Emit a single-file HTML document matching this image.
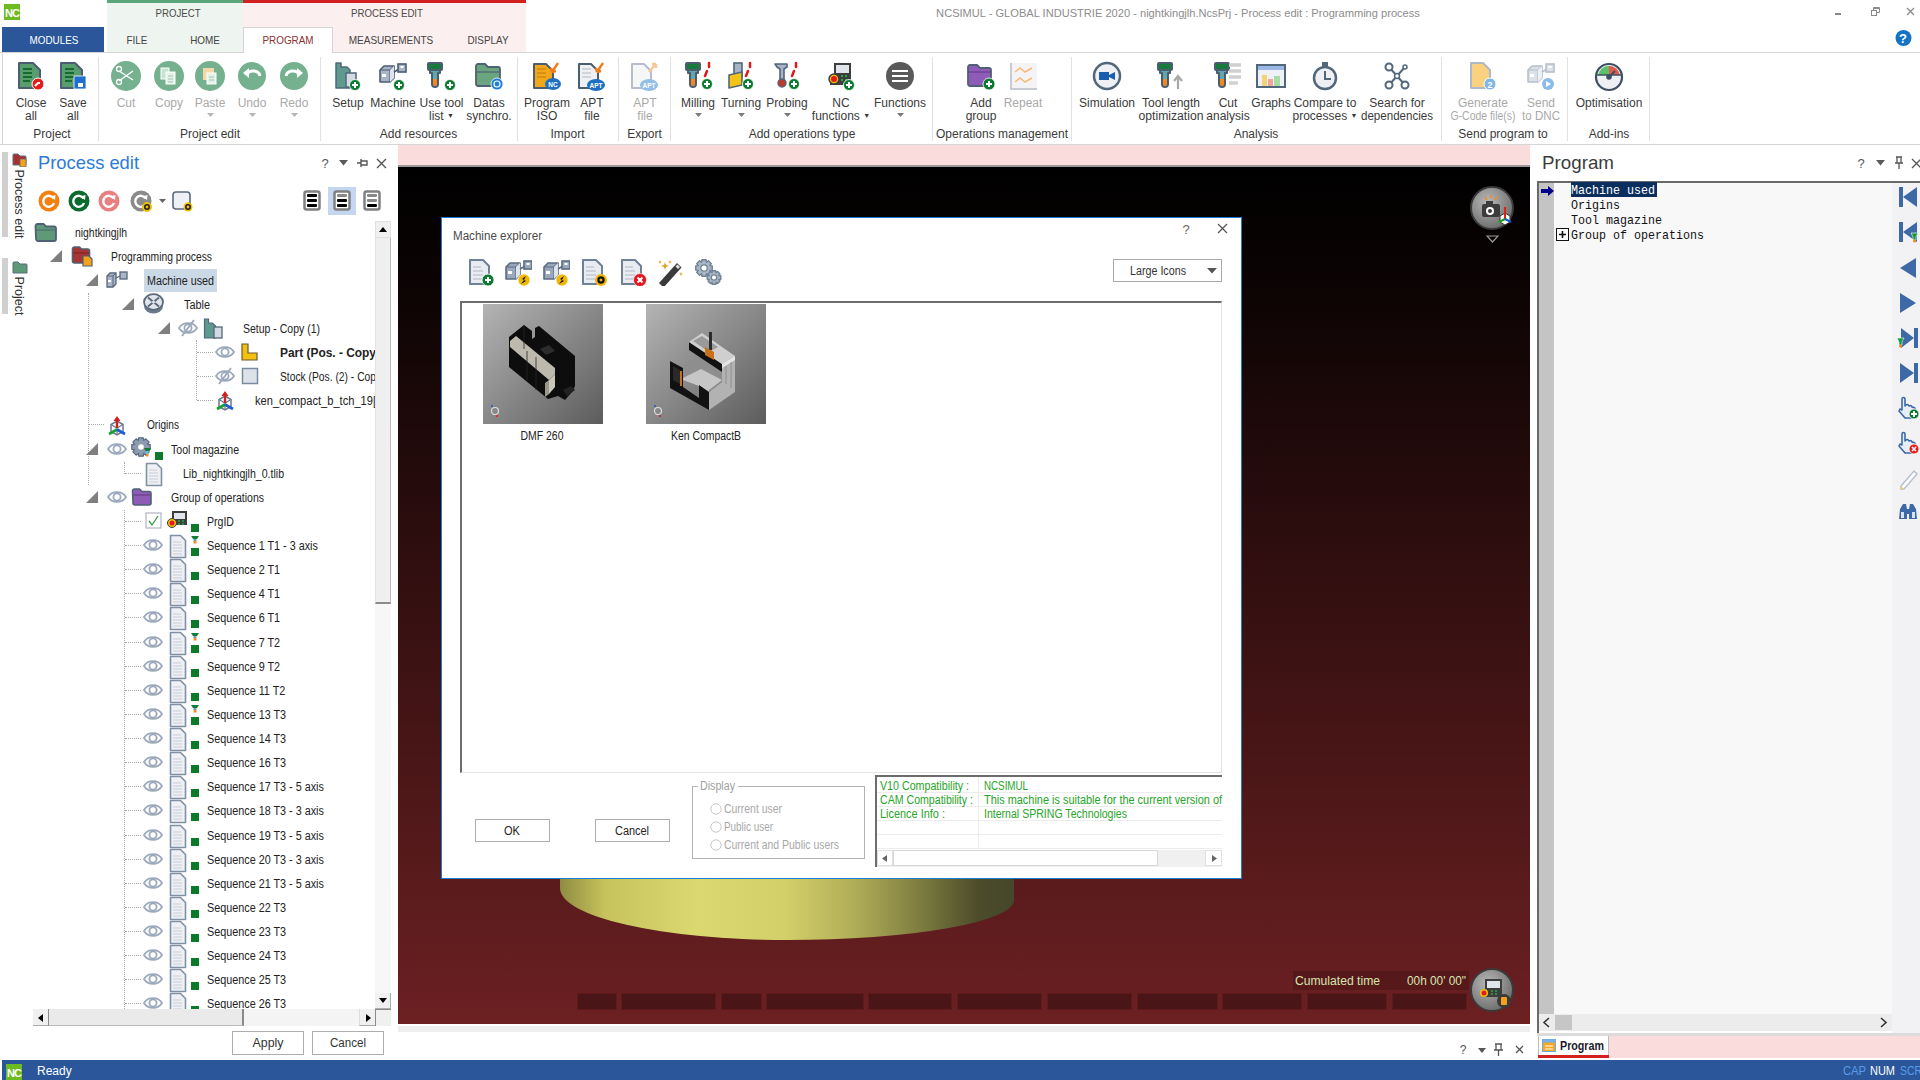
<!DOCTYPE html><html><head><meta charset="utf-8"><style>
*{margin:0;padding:0;box-sizing:border-box}
html,body{width:1920px;height:1080px;overflow:hidden;background:#fff;font-family:"Liberation Sans",sans-serif}
.a{position:absolute}
.t{position:absolute;white-space:nowrap;line-height:1}
</style></head><body><div class="a" style="left:4px;top:4px;width:16px;height:16px;background:#6cbb21"></div><div class="t" style="left:12px;top:12.5px;font-size:11px;color:#fff;font-weight:bold;letter-spacing:-1px;font-family:'Liberation Sans',sans-serif;transform:translate(-50%,-50%);">NC</div><div class="a" style="left:107px;top:0px;width:136px;height:52px;background:#eef5f0"></div><div class="a" style="left:107px;top:0px;width:136px;height:3px;background:#5ba57b"></div><div class="a" style="left:243px;top:0px;width:283px;height:52px;background:#fcefef"></div><div class="a" style="left:243px;top:0px;width:283px;height:3px;background:#d21f1f"></div><div class="t" style="left:178px;top:14px;font-size:11.5px;color:#4a4a4a;font-family:'Liberation Sans',sans-serif;transform:translate(-50%,-50%) scaleX(0.84);transform-origin:50% 50%;">PROJECT</div><div class="t" style="left:387px;top:14px;font-size:11.5px;color:#4a4a4a;font-family:'Liberation Sans',sans-serif;transform:translate(-50%,-50%) scaleX(0.84);transform-origin:50% 50%;">PROCESS EDIT</div><div class="t" style="left:1178px;top:13.5px;font-size:11.1px;color:#8c8c8c;font-family:'Liberation Sans',sans-serif;transform:translate(-50%,-50%);">NCSIMUL - GLOBAL INDUSTRIE 2020 - nightkingjlh.NcsPrj - Process edit : Programming process</div><div class="a" style="left:1835px;top:13px;width:6px;height:2px;background:#8a8a8a"></div><svg class="a" style="left:1871px;top:7px" width="9" height="9" viewBox="0 0 9 9"><rect x="0.5" y="3.5" width="5" height="5" fill="none" stroke="#8a8a8a"/><path d="M2.5 3.5V0.5h6v5h-3" fill="none" stroke="#8a8a8a"/><path d="M2.5 1.5h6" stroke="#8a8a8a"/></svg><svg class="a" style="left:1906px;top:7px" width="9" height="9" viewBox="0 0 9 9"><path d="M1 1L8 8M8 1L1 8" stroke="#8a8a8a" stroke-width="1.3"/></svg><div class="a" style="left:2px;top:27px;width:102px;height:25px;background:#2b579a"></div><div class="t" style="left:54px;top:41px;font-size:11.5px;color:#fff;font-family:'Liberation Sans',sans-serif;transform:translate(-50%,-50%) scaleX(0.86);transform-origin:50% 50%;">MODULES</div><div class="a" style="left:0px;top:52px;width:1920px;height:1px;background:#d5d5d5"></div><div class="a" style="left:243px;top:27px;width:90px;height:26px;background:#fff;border:1px solid #d5d5d5;border-bottom:none"></div><div class="t" style="left:137px;top:41px;font-size:11.5px;color:#444;font-family:'Liberation Sans',sans-serif;transform:translate(-50%,-50%) scaleX(0.86);transform-origin:50% 50%;">FILE</div><div class="t" style="left:205px;top:41px;font-size:11.5px;color:#444;font-family:'Liberation Sans',sans-serif;transform:translate(-50%,-50%) scaleX(0.86);transform-origin:50% 50%;">HOME</div><div class="t" style="left:288px;top:41px;font-size:11.5px;color:#8c3232;font-family:'Liberation Sans',sans-serif;transform:translate(-50%,-50%) scaleX(0.86);transform-origin:50% 50%;">PROGRAM</div><div class="t" style="left:391px;top:41px;font-size:11.5px;color:#444;font-family:'Liberation Sans',sans-serif;transform:translate(-50%,-50%) scaleX(0.87);transform-origin:50% 50%;">MEASUREMENTS</div><div class="t" style="left:488px;top:41px;font-size:11.5px;color:#444;font-family:'Liberation Sans',sans-serif;transform:translate(-50%,-50%) scaleX(0.86);transform-origin:50% 50%;">DISPLAY</div><svg class="a" style="left:1894px;top:29px" width="18" height="18" viewBox="0 0 18 18"><circle cx="9.5" cy="9" r="8" fill="#1473c4"/><text x="9" y="13.5" font-size="13" font-weight="bold" fill="#fff" text-anchor="middle" font-family="Liberation Sans">?</text></svg><div class="a" style="left:2px;top:53px;width:1px;height:92px;background:#d5d5d5"></div><div class="a" style="left:0px;top:144px;width:1920px;height:1px;background:#d5d5d5"></div><div class="a" style="left:98px;top:57px;width:1px;height:84px;background:#e2e2e2"></div><div class="a" style="left:320px;top:57px;width:1px;height:84px;background:#e2e2e2"></div><div class="a" style="left:517px;top:57px;width:1px;height:84px;background:#e2e2e2"></div><div class="a" style="left:618px;top:57px;width:1px;height:84px;background:#e2e2e2"></div><div class="a" style="left:670px;top:57px;width:1px;height:84px;background:#e2e2e2"></div><div class="a" style="left:932px;top:57px;width:1px;height:84px;background:#e2e2e2"></div><div class="a" style="left:1071px;top:57px;width:1px;height:84px;background:#e2e2e2"></div><div class="a" style="left:1441px;top:57px;width:1px;height:84px;background:#e2e2e2"></div><div class="a" style="left:1567px;top:57px;width:1px;height:84px;background:#e2e2e2"></div><div class="a" style="left:1649px;top:57px;width:1px;height:84px;background:#e2e2e2"></div><svg class="a" style="left:15px;top:60px" width="32" height="32" viewBox="0 0 32 32"><path d="M4 3h14l7 7v18h-21z" fill="#579d6e" stroke="#4c5d70" stroke-width="2" stroke-linejoin="round"/><path d="M8 9h9M8 13h9M8 17h9M8 21h7" stroke="#166a30" stroke-width="2"/><circle cx="23" cy="24" r="6" fill="#e31c1c" stroke="#fff" stroke-width="1"/><path d="M20 26l3-3h2" stroke="#fff" stroke-width="2" fill="none"/></svg><div class="t" style="left:31px;top:102.5px;font-size:12px;color:#3a3a3a;font-family:'Liberation Sans',sans-serif;transform:translate(-50%,-50%);">Close</div><div class="t" style="left:31px;top:115.5px;font-size:12px;color:#3a3a3a;font-family:'Liberation Sans',sans-serif;transform:translate(-50%,-50%);">all</div><svg class="a" style="left:57px;top:60px" width="32" height="32" viewBox="0 0 32 32"><path d="M4 3h14l7 7v18h-21z" fill="#579d6e" stroke="#4c5d70" stroke-width="2" stroke-linejoin="round"/><path d="M8 9h9M8 13h9M8 17h9M8 21h7" stroke="#166a30" stroke-width="2"/><rect x="17" y="16" width="12" height="13" fill="#1e6fcf" stroke="#fff" stroke-width="0.8"/><rect x="21" y="23" width="5" height="4" fill="#fff"/></svg><div class="t" style="left:73px;top:102.5px;font-size:12px;color:#3a3a3a;font-family:'Liberation Sans',sans-serif;transform:translate(-50%,-50%);">Save</div><div class="t" style="left:73px;top:115.5px;font-size:12px;color:#3a3a3a;font-family:'Liberation Sans',sans-serif;transform:translate(-50%,-50%);">all</div><svg class="a" style="left:110px;top:60px" width="32" height="32" viewBox="0 0 32 32"><circle cx="16" cy="16" r="15" fill="#75b08f"/><path d="M9 11l14 9M9 21l14-10" stroke="#fff" stroke-width="1.4"/><circle cx="9" cy="9" r="2.5" fill="none" stroke="#fff" stroke-width="1.3"/><circle cx="9" cy="22" r="2.5" fill="none" stroke="#fff" stroke-width="1.3"/></svg><div class="t" style="left:126px;top:102.5px;font-size:12px;color:#a9a9a9;font-family:'Liberation Sans',sans-serif;transform:translate(-50%,-50%);">Cut</div><svg class="a" style="left:153px;top:60px" width="32" height="32" viewBox="0 0 32 32"><circle cx="16" cy="16" r="15" fill="#75b08f"/><rect x="8" y="8" width="8" height="11" fill="#c8e3d2" stroke="#fff"/><rect x="13" y="12" width="9" height="12" fill="#e5f2ea" stroke="#fff"/><path d="M15 16h5M15 19h5M15 22h5" stroke="#9cc7ad"/></svg><div class="t" style="left:169px;top:102.5px;font-size:12px;color:#a9a9a9;font-family:'Liberation Sans',sans-serif;transform:translate(-50%,-50%);">Copy</div><svg class="a" style="left:194px;top:60px" width="32" height="32" viewBox="0 0 32 32"><circle cx="16" cy="16" r="15" fill="#75b08f"/><rect x="9" y="8" width="11" height="12" fill="#f3d9a9"/><rect x="13" y="13" width="9" height="11" fill="#e5f2ea" stroke="#fff"/><path d="M15 17h5M15 20h5" stroke="#9cc7ad"/></svg><div class="t" style="left:210px;top:102.5px;font-size:12px;color:#a9a9a9;font-family:'Liberation Sans',sans-serif;transform:translate(-50%,-50%);">Paste</div><svg class="a" style="left:207px;top:113px" width="7" height="4" viewBox="0 0 7 4"><path d="M0 0h7L3.5 4z" fill="#b5b5b5"/></svg><svg class="a" style="left:236px;top:60px" width="32" height="32" viewBox="0 0 32 32"><circle cx="16" cy="16" r="14" fill="#75b08f"/><path d="M11 14a7 6 0 0 1 13 2" fill="none" stroke="#fff" stroke-width="3"/><path d="M7 13l6-5v10z" fill="#fff"/></svg><div class="t" style="left:252px;top:102.5px;font-size:12px;color:#a9a9a9;font-family:'Liberation Sans',sans-serif;transform:translate(-50%,-50%);">Undo</div><svg class="a" style="left:249px;top:113px" width="7" height="4" viewBox="0 0 7 4"><path d="M0 0h7L3.5 4z" fill="#b5b5b5"/></svg><svg class="a" style="left:278px;top:60px" width="32" height="32" viewBox="0 0 32 32"><circle cx="16" cy="16" r="14" fill="#75b08f"/><path d="M21 14a7 6 0 0 0 -13 2" fill="none" stroke="#fff" stroke-width="3"/><path d="M25 13l-6-5v10z" fill="#fff"/></svg><div class="t" style="left:294px;top:102.5px;font-size:12px;color:#a9a9a9;font-family:'Liberation Sans',sans-serif;transform:translate(-50%,-50%);">Redo</div><svg class="a" style="left:291px;top:113px" width="7" height="4" viewBox="0 0 7 4"><path d="M0 0h7L3.5 4z" fill="#b5b5b5"/></svg><svg class="a" style="left:332px;top:60px" width="32" height="32" viewBox="0 0 32 32"><path d="M4 3h5v4h6l3 3v18h-14z" fill="#5f9a8f" stroke="#52677a" stroke-width="1.5" stroke-linejoin="round"/><rect x="14" y="13" width="10" height="14" fill="#d4d9e3" stroke="#52677a" stroke-width="1.5"/><circle cx="23" cy="25" r="5.5" fill="#0b7a30" stroke="#fff" stroke-width="0.8"/><path d="M20 25h6M23 22v6" stroke="#fff" stroke-width="2"/></svg><div class="t" style="left:348px;top:102.5px;font-size:12px;color:#3a3a3a;font-family:'Liberation Sans',sans-serif;transform:translate(-50%,-50%);">Setup</div><svg class="a" style="left:377px;top:60px" width="32" height="32" viewBox="0 0 32 32"><g transform="translate(2,2)"><path d="M1 8l4-4h10v12l-4 4H1z" fill="#a9b5c8" stroke="#4c5d70" stroke-width="1.6" stroke-linejoin="round"/><path d="M11 8H1M11 8l4-4M11 8v12" stroke="#4c5d70" stroke-width="1.2" fill="none"/><path d="M11 8l4-4v12l-4 4z" fill="#dfe4ec"/><rect x="3" y="12" width="4" height="3" fill="#fff"/><path d="M15 10l5-3" stroke="#4c5d70" stroke-width="1.6"/><rect x="19" y="2" width="8" height="8" fill="#a9b5c8" stroke="#4c5d70" stroke-width="1.6"/><rect x="21.5" y="4" width="3" height="2" fill="#fff"/></g><circle cx="22" cy="25" r="5.5" fill="#0b7a30" stroke="#fff" stroke-width="0.8"/><path d="M19 25h6M22 22v6" stroke="#fff" stroke-width="2"/></svg><div class="t" style="left:393px;top:102.5px;font-size:12px;color:#3a3a3a;font-family:'Liberation Sans',sans-serif;transform:translate(-50%,-50%);">Machine</div><svg class="a" style="left:425px;top:60px" width="32" height="32" viewBox="0 0 32 32"><g transform="translate(2,2) scale(1)"><rect x="1" y="1" width="14" height="7" rx="1" fill="#167a3c" stroke="#4c5d70" stroke-width="2"/><path d="M3 8h10v3h-2v11a3 3 0 0 1-6 0V11H3z" fill="#5fa8b0" stroke="#4c5d70" stroke-width="2" stroke-linejoin="round"/><path d="M6 17h4v5a2 2 0 0 1-4 0z" fill="#f48a1c"/></g><circle cx="25" cy="25" r="5.5" fill="#0b7a30" stroke="#fff" stroke-width="0.8"/><path d="M22 25h6M25 22v6" stroke="#fff" stroke-width="2"/></svg><div class="t" style="left:441.5px;top:102.5px;font-size:12px;color:#3a3a3a;font-family:'Liberation Sans',sans-serif;transform:translate(-50%,-50%);">Use tool</div><div class="t" style="left:441.5px;top:115.5px;font-size:12px;color:#3a3a3a;font-family:'Liberation Sans',sans-serif;transform:translate(-50%,-50%);">list <span style="font-size:7px;vertical-align:2px">▼</span></div><svg class="a" style="left:473px;top:60px" width="32" height="32" viewBox="0 0 32 32"><path d="M3 6a2 2 0 0 1 2-2h7l3 3h10a2 2 0 0 1 2 2v15a2 2 0 0 1-2 2H5a2 2 0 0 1-2-2z" fill="#6aa57f" stroke="#4f6174" stroke-width="1.8"/><path d="M3 12h24" stroke="#4f6174" stroke-width="1.2"/><circle cx="24" cy="24" r="6" fill="#1d7fd8" stroke="#fff" stroke-width="0.8"/><circle cx="24" cy="24" r="3" fill="none" stroke="#fff" stroke-width="1.2"/></svg><div class="t" style="left:489px;top:102.5px;font-size:12px;color:#3a3a3a;font-family:'Liberation Sans',sans-serif;transform:translate(-50%,-50%);">Datas</div><div class="t" style="left:489px;top:115.5px;font-size:12px;color:#3a3a3a;font-family:'Liberation Sans',sans-serif;transform:translate(-50%,-50%);">synchro.</div><svg class="a" style="left:531px;top:60px" width="32" height="32" viewBox="0 0 32 32"><path d="M3 4h12l7 7v17h-19z" fill="#f2a71a" stroke="#4c5d70" stroke-width="2" stroke-linejoin="round"/><path d="M6 9h9M6 13h9M6 17h9" stroke="#d08a10" stroke-width="1.5"/><ellipse cx="22" cy="24" rx="8" ry="6" fill="#1e70c2"/><text x="22" y="26.5" font-size="6.5" font-weight="bold" fill="#fff" text-anchor="middle" font-family="Liberation Sans">NC</text><path d="M27 3l-6 9M21 12l-1-4M21 12l4-1" stroke="#f07d1a" stroke-width="2.4"/></svg><div class="t" style="left:547px;top:102.5px;font-size:12px;color:#3a3a3a;font-family:'Liberation Sans',sans-serif;transform:translate(-50%,-50%);">Program</div><div class="t" style="left:547px;top:115.5px;font-size:12px;color:#3a3a3a;font-family:'Liberation Sans',sans-serif;transform:translate(-50%,-50%);">ISO</div><svg class="a" style="left:576px;top:60px" width="32" height="32" viewBox="0 0 32 32"><path d="M3 4h12l7 7v17h-19z" fill="#eef0f4" stroke="#4c5d70" stroke-width="2" stroke-linejoin="round"/><path d="M6 9h9M6 13h9M6 17h9" stroke="#c8ccd6" stroke-width="1.5"/><ellipse cx="20" cy="25" rx="9" ry="6" fill="#1e70c2"/><text x="20" y="27.5" font-size="6.5" font-weight="bold" fill="#fff" text-anchor="middle" font-family="Liberation Sans">APT</text><path d="M27 3l-6 9M21 12l-1-4M21 12l4-1" stroke="#f07d1a" stroke-width="2.4"/></svg><div class="t" style="left:592px;top:102.5px;font-size:12px;color:#3a3a3a;font-family:'Liberation Sans',sans-serif;transform:translate(-50%,-50%);">APT</div><div class="t" style="left:592px;top:115.5px;font-size:12px;color:#3a3a3a;font-family:'Liberation Sans',sans-serif;transform:translate(-50%,-50%);">file</div><svg class="a" style="left:629px;top:60px" width="32" height="32" viewBox="0 0 32 32"><g opacity="0.55"><path d="M3 4h12l7 7v17h-19z" fill="#eef0f4" stroke="#7a8aa0" stroke-width="2" stroke-linejoin="round"/><ellipse cx="20" cy="25" rx="9" ry="6" fill="#3c8bd6"/><text x="20" y="27.5" font-size="6.5" font-weight="bold" fill="#fff" text-anchor="middle" font-family="Liberation Sans">APT</text><path d="M20 12l7-8M27 4l-4 0M27 4l0 4" stroke="#f59a3c" stroke-width="2.4"/></g></svg><div class="t" style="left:645px;top:102.5px;font-size:12px;color:#a9a9a9;font-family:'Liberation Sans',sans-serif;transform:translate(-50%,-50%);">APT</div><div class="t" style="left:645px;top:115.5px;font-size:12px;color:#a9a9a9;font-family:'Liberation Sans',sans-serif;transform:translate(-50%,-50%);">file</div><svg class="a" style="left:682px;top:60px" width="32" height="32" viewBox="0 0 32 32"><g transform="translate(3,2) scale(1)"><rect x="1" y="1" width="14" height="7" rx="1" fill="#167a3c" stroke="#4c5d70" stroke-width="2"/><path d="M3 8h10v3h-2v11a3 3 0 0 1-6 0V11H3z" fill="#5fa8b0" stroke="#4c5d70" stroke-width="2" stroke-linejoin="round"/><path d="M6 17h4v5a2 2 0 0 1-4 0z" fill="#f48a1c"/></g><path d="M27 3v4M25 11l-2 5" stroke="#e01818" stroke-width="2.5" stroke-linecap="round"/><circle cx="25" cy="24" r="5.5" fill="#0b7a30" stroke="#fff" stroke-width="0.8"/><path d="M22 24h6M25 21v6" stroke="#fff" stroke-width="2"/></svg><div class="t" style="left:698px;top:102.5px;font-size:12px;color:#3a3a3a;font-family:'Liberation Sans',sans-serif;transform:translate(-50%,-50%);">Milling</div><svg class="a" style="left:695px;top:113px" width="7" height="4" viewBox="0 0 7 4"><path d="M0 0h7L3.5 4z" fill="#7a7a7a"/></svg><svg class="a" style="left:725px;top:60px" width="32" height="32" viewBox="0 0 32 32"><rect x="9" y="3" width="8" height="14" fill="#a7b3c6" stroke="#52677a" stroke-width="1.6"/><path d="M4 15l13-3v13l-13 3z" fill="#f4c315" stroke="#52677a" stroke-width="1.6" stroke-linejoin="round"/><path d="M25 3v4M23 11l-2 5" stroke="#e01818" stroke-width="2.5" stroke-linecap="round"/><circle cx="23" cy="24" r="5.5" fill="#0b7a30" stroke="#fff" stroke-width="0.8"/><path d="M20 24h6M23 21v6" stroke="#fff" stroke-width="2"/></svg><div class="t" style="left:741px;top:102.5px;font-size:12px;color:#3a3a3a;font-family:'Liberation Sans',sans-serif;transform:translate(-50%,-50%);">Turning</div><svg class="a" style="left:738px;top:113px" width="7" height="4" viewBox="0 0 7 4"><path d="M0 0h7L3.5 4z" fill="#7a7a7a"/></svg><svg class="a" style="left:771px;top:60px" width="32" height="32" viewBox="0 0 32 32"><path d="M4 4h12v3l-3 2v12h-4V9L6 7z" fill="#a7b3c6" stroke="#52677a" stroke-width="1.6" stroke-linejoin="round"/><circle cx="11" cy="23" r="4" fill="#c0392b" stroke="#52677a" stroke-width="1.4"/><path d="M25 3v4M23 11l-2 5" stroke="#e01818" stroke-width="2.5" stroke-linecap="round"/><circle cx="23" cy="24" r="5.5" fill="#0b7a30" stroke="#fff" stroke-width="0.8"/><path d="M20 24h6M23 21v6" stroke="#fff" stroke-width="2"/></svg><div class="t" style="left:787px;top:102.5px;font-size:12px;color:#3a3a3a;font-family:'Liberation Sans',sans-serif;transform:translate(-50%,-50%);">Probing</div><svg class="a" style="left:784px;top:113px" width="7" height="4" viewBox="0 0 7 4"><path d="M0 0h7L3.5 4z" fill="#7a7a7a"/></svg><svg class="a" style="left:825px;top:60px" width="32" height="32" viewBox="0 0 32 32"><path d="M9 3h17v22H5v-9h4z" fill="#3d3d3d"/><rect x="11" y="5" width="13" height="8" fill="#e1e4ea"/><circle cx="9" cy="19" r="5" fill="#f2c10f" stroke="#3d3d3d" stroke-width="1.5"/><circle cx="9" cy="19" r="3" fill="#e31b1b"/><path d="M16 16h2M20 16h2M16 20h2M20 20h2" stroke="#22aa44" stroke-width="2"/><circle cx="24" cy="25" r="5.5" fill="#0b7a30" stroke="#fff" stroke-width="0.8"/><path d="M21 25h6M24 22v6" stroke="#fff" stroke-width="2"/></svg><div class="t" style="left:841px;top:102.5px;font-size:12px;color:#3a3a3a;font-family:'Liberation Sans',sans-serif;transform:translate(-50%,-50%);">NC</div><div class="t" style="left:841px;top:115.5px;font-size:12px;color:#3a3a3a;font-family:'Liberation Sans',sans-serif;transform:translate(-50%,-50%);">functions <span style="font-size:7px;vertical-align:2px">▼</span></div><svg class="a" style="left:884px;top:60px" width="32" height="32" viewBox="0 0 32 32"><circle cx="16" cy="16" r="14" fill="#5a5a5a"/><path d="M8 11h16M8 16h16M8 21h16" stroke="#fff" stroke-width="2.2"/></svg><div class="t" style="left:900px;top:102.5px;font-size:12px;color:#3a3a3a;font-family:'Liberation Sans',sans-serif;transform:translate(-50%,-50%);">Functions</div><svg class="a" style="left:897px;top:113px" width="7" height="4" viewBox="0 0 7 4"><path d="M0 0h7L3.5 4z" fill="#7a7a7a"/></svg><svg class="a" style="left:965px;top:60px" width="32" height="32" viewBox="0 0 32 32"><path d="M3 7a2 2 0 0 1 2-2h7l3 3h9a2 2 0 0 1 2 2v14a2 2 0 0 1-2 2H5a2 2 0 0 1-2-2z" fill="#8f5bb8" stroke="#4f6174" stroke-width="1.8"/><path d="M3 12h23" stroke="#5c3a80" stroke-width="1"/><circle cx="24" cy="24" r="6" fill="#0b7a30" stroke="#fff" stroke-width="0.8"/><path d="M21 24h6M24 21v6" stroke="#fff" stroke-width="2"/></svg><div class="t" style="left:981px;top:102.5px;font-size:12px;color:#3a3a3a;font-family:'Liberation Sans',sans-serif;transform:translate(-50%,-50%);">Add</div><div class="t" style="left:981px;top:115.5px;font-size:12px;color:#3a3a3a;font-family:'Liberation Sans',sans-serif;transform:translate(-50%,-50%);">group</div><svg class="a" style="left:1007px;top:60px" width="32" height="32" viewBox="0 0 32 32"><rect x="4" y="3" width="26" height="26" fill="#f4f4f6"/><path d="M4 3v26h26" stroke="#b6bcc8" stroke-width="1.5" fill="none"/><path d="M8 12l5-4 5 4 7-4M8 22l5-4 5 4 7-4" stroke="#f8b878" stroke-width="1.5" fill="none"/></svg><div class="t" style="left:1023px;top:102.5px;font-size:12px;color:#a9a9a9;font-family:'Liberation Sans',sans-serif;transform:translate(-50%,-50%);">Repeat</div><svg class="a" style="left:1091px;top:60px" width="32" height="32" viewBox="0 0 32 32"><circle cx="16" cy="16" r="13" fill="#eef0f4" stroke="#52677a" stroke-width="2.5"/><rect x="8" y="12" width="10" height="8" fill="#1a5fae"/><path d="M18 15l6-3v8l-6-3z" fill="#1a5fae"/></svg><div class="t" style="left:1107px;top:102.5px;font-size:12px;color:#3a3a3a;font-family:'Liberation Sans',sans-serif;transform:translate(-50%,-50%);">Simulation</div><svg class="a" style="left:1155px;top:60px" width="32" height="32" viewBox="0 0 32 32"><g transform="translate(2,2) scale(1)"><rect x="1" y="1" width="14" height="7" rx="1" fill="#167a3c" stroke="#4c5d70" stroke-width="2"/><path d="M3 8h10v3h-2v11a3 3 0 0 1-6 0V11H3z" fill="#5fa8b0" stroke="#4c5d70" stroke-width="2" stroke-linejoin="round"/><path d="M6 17h4v5a2 2 0 0 1-4 0z" fill="#f48a1c"/></g><path d="M23 29V17M19 21l4-5 4 5" stroke="#a8a8a8" stroke-width="2.2" fill="none"/></svg><div class="t" style="left:1171px;top:102.5px;font-size:12px;color:#3a3a3a;font-family:'Liberation Sans',sans-serif;transform:translate(-50%,-50%);">Tool length</div><div class="t" style="left:1171px;top:115.5px;font-size:12px;color:#3a3a3a;font-family:'Liberation Sans',sans-serif;transform:translate(-50%,-50%) scaleX(1.0151);transform-origin:50% 50%;">optimization</div><svg class="a" style="left:1212px;top:60px" width="32" height="32" viewBox="0 0 32 32"><g transform="translate(2,2) scale(1)"><rect x="1" y="1" width="14" height="7" rx="1" fill="#167a3c" stroke="#4c5d70" stroke-width="2"/><path d="M3 8h10v3h-2v11a3 3 0 0 1-6 0V11H3z" fill="#5fa8b0" stroke="#4c5d70" stroke-width="2" stroke-linejoin="round"/><path d="M6 17h4v5a2 2 0 0 1-4 0z" fill="#f48a1c"/></g><path d="M17 5h12M17 11h12M17 17h12M17 23h9" stroke="#d0d0d0" stroke-width="3.5"/></svg><div class="t" style="left:1228px;top:102.5px;font-size:12px;color:#3a3a3a;font-family:'Liberation Sans',sans-serif;transform:translate(-50%,-50%);">Cut</div><div class="t" style="left:1228px;top:115.5px;font-size:12px;color:#3a3a3a;font-family:'Liberation Sans',sans-serif;transform:translate(-50%,-50%);">analysis</div><svg class="a" style="left:1255px;top:60px" width="32" height="32" viewBox="0 0 32 32"><rect x="2" y="5" width="28" height="22" fill="#eef1f6" stroke="#52677a" stroke-width="2"/><rect x="3" y="6" width="26" height="4" fill="#9ab7e6"/><rect x="7" y="15" width="5" height="11" fill="#f4d37a"/><rect x="13" y="19" width="5" height="7" fill="#f4a59a"/><rect x="19" y="16" width="6" height="10" fill="#a8dca6"/></svg><div class="t" style="left:1271px;top:102.5px;font-size:12px;color:#3a3a3a;font-family:'Liberation Sans',sans-serif;transform:translate(-50%,-50%);">Graphs</div><svg class="a" style="left:1309px;top:60px" width="32" height="32" viewBox="0 0 32 32"><circle cx="16" cy="18" r="11" fill="#eef0f4" stroke="#52677a" stroke-width="2.5"/><rect x="13" y="2" width="6" height="4" fill="#52677a"/><path d="M16 11v8h6" stroke="#52677a" stroke-width="2" fill="none"/></svg><div class="t" style="left:1325px;top:102.5px;font-size:12px;color:#3a3a3a;font-family:'Liberation Sans',sans-serif;transform:translate(-50%,-50%);">Compare to</div><div class="t" style="left:1325px;top:115.5px;font-size:12px;color:#3a3a3a;font-family:'Liberation Sans',sans-serif;transform:translate(-50%,-50%);">processes <span style="font-size:7px;vertical-align:2px">▼</span></div><svg class="a" style="left:1381px;top:60px" width="32" height="32" viewBox="0 0 32 32"><path d="M8 7l16 18M24 7L8 25" stroke="#52677a" stroke-width="2"/><circle cx="8" cy="7" r="3.5" fill="#fff" stroke="#52677a" stroke-width="2"/><circle cx="24" cy="7" r="2" fill="#fff" stroke="#52677a" stroke-width="1.5"/><circle cx="8" cy="25" r="3.5" fill="#fff" stroke="#52677a" stroke-width="2"/><circle cx="24" cy="25" r="3.5" fill="#fff" stroke="#52677a" stroke-width="2"/><circle cx="16" cy="16" r="2.5" fill="#fff" stroke="#52677a" stroke-width="1.5"/></svg><div class="t" style="left:1397px;top:102.5px;font-size:12px;color:#3a3a3a;font-family:'Liberation Sans',sans-serif;transform:translate(-50%,-50%);">Search for</div><div class="t" style="left:1397px;top:115.5px;font-size:12px;color:#3a3a3a;font-family:'Liberation Sans',sans-serif;transform:translate(-50%,-50%) scaleX(0.9634);transform-origin:50% 50%;">dependencies</div><svg class="a" style="left:1467px;top:60px" width="32" height="32" viewBox="0 0 32 32"><g opacity="0.6"><path d="M4 3h12l7 7v18h-19z" fill="#f7b32a" stroke="#7c8ca2" stroke-width="2" stroke-linejoin="round"/><circle cx="23" cy="24" r="6" fill="#2e86d8" stroke="#fff"/><text x="23" y="27.5" font-size="9" font-weight="bold" fill="#fff" text-anchor="middle" font-family="Liberation Sans">2</text></g></svg><div class="t" style="left:1483px;top:102.5px;font-size:12px;color:#a9a9a9;font-family:'Liberation Sans',sans-serif;transform:translate(-50%,-50%);">Generate</div><div class="t" style="left:1483px;top:115.5px;font-size:12px;color:#a9a9a9;font-family:'Liberation Sans',sans-serif;transform:translate(-50%,-50%) scaleX(0.8703);transform-origin:50% 50%;">G-Code file(s)</div><svg class="a" style="left:1525px;top:60px" width="32" height="32" viewBox="0 0 32 32"><g opacity="0.55"><g transform="translate(2,2)"><path d="M1 8l4-4h10v12l-4 4H1z" fill="#c3cad6" stroke="#7c8ca2" stroke-width="1.6" stroke-linejoin="round"/><path d="M11 8H1M11 8l4-4M11 8v12" stroke="#7c8ca2" stroke-width="1.2" fill="none"/><path d="M11 8l4-4v12l-4 4z" fill="#dfe4ec"/><rect x="3" y="12" width="4" height="3" fill="#fff"/><path d="M15 10l5-3" stroke="#7c8ca2" stroke-width="1.6"/><rect x="19" y="2" width="8" height="8" fill="#c3cad6" stroke="#7c8ca2" stroke-width="1.6"/><rect x="21.5" y="4" width="3" height="2" fill="#fff"/></g><circle cx="23" cy="24" r="6" fill="#2e86d8"/><path d="M21 21l5 3-5 3z" fill="#fff"/></g></svg><div class="t" style="left:1541px;top:102.5px;font-size:12px;color:#a9a9a9;font-family:'Liberation Sans',sans-serif;transform:translate(-50%,-50%);">Send</div><div class="t" style="left:1541px;top:115.5px;font-size:12px;color:#a9a9a9;font-family:'Liberation Sans',sans-serif;transform:translate(-50%,-50%) scaleX(0.9658);transform-origin:50% 50%;">to DNC</div><svg class="a" style="left:1593px;top:60px" width="32" height="32" viewBox="0 0 32 32"><circle cx="16" cy="17" r="13" fill="#eef0f4" stroke="#3d4f62" stroke-width="2.2"/><path d="M5 15a11 11 0 0 1 11-9v9z" fill="#5cbf6a"/><path d="M16 6a11 11 0 0 1 11 9h-11z" fill="#e05a4e"/><path d="M4 15h24" stroke="#3d4f62" stroke-width="1.5"/><circle cx="16" cy="17" r="2.8" fill="#3d4f62"/><path d="M16 17l6-6" stroke="#3d4f62" stroke-width="1.8"/></svg><div class="t" style="left:1609px;top:102.5px;font-size:12px;color:#3a3a3a;font-family:'Liberation Sans',sans-serif;transform:translate(-50%,-50%);">Optimisation</div><div class="t" style="left:52px;top:133.5px;font-size:12px;color:#3a3a3a;font-family:'Liberation Sans',sans-serif;transform:translate(-50%,-50%);">Project</div><div class="t" style="left:210px;top:133.5px;font-size:12px;color:#3a3a3a;font-family:'Liberation Sans',sans-serif;transform:translate(-50%,-50%);">Project edit</div><div class="t" style="left:418.5px;top:133.5px;font-size:12px;color:#3a3a3a;font-family:'Liberation Sans',sans-serif;transform:translate(-50%,-50%);">Add resources</div><div class="t" style="left:567.5px;top:133.5px;font-size:12px;color:#3a3a3a;font-family:'Liberation Sans',sans-serif;transform:translate(-50%,-50%);">Import</div><div class="t" style="left:644.5px;top:133.5px;font-size:12px;color:#3a3a3a;font-family:'Liberation Sans',sans-serif;transform:translate(-50%,-50%);">Export</div><div class="t" style="left:802px;top:133.5px;font-size:12px;color:#3a3a3a;font-family:'Liberation Sans',sans-serif;transform:translate(-50%,-50%);">Add operations type</div><div class="t" style="left:1002px;top:133.5px;font-size:12px;color:#3a3a3a;font-family:'Liberation Sans',sans-serif;transform:translate(-50%,-50%);">Operations management</div><div class="t" style="left:1256px;top:133.5px;font-size:12px;color:#3a3a3a;font-family:'Liberation Sans',sans-serif;transform:translate(-50%,-50%);">Analysis</div><div class="t" style="left:1503px;top:133.5px;font-size:12px;color:#3a3a3a;font-family:'Liberation Sans',sans-serif;transform:translate(-50%,-50%);">Send program to</div><div class="t" style="left:1609px;top:133.5px;font-size:12px;color:#3a3a3a;font-family:'Liberation Sans',sans-serif;transform:translate(-50%,-50%);">Add-ins</div><div class="a" style="left:398px;top:145px;width:1132px;height:20px;background:#fadcdc"></div><div class="a" style="left:398px;top:165px;width:1132px;height:2px;background:#9a9a9a"></div><div class="a" style="left:398px;top:167px;width:1132px;height:857px;background:linear-gradient(#000 0%,#0a0303 12%,#6c2022 100%)"></div><svg class="a" style="left:555px;top:860px" width="470" height="85" viewBox="0 0 470 85"><defs><linearGradient id="cyl" x1="0" x2="1"><stop offset="0" stop-color="#8e8c42"/><stop offset="0.1" stop-color="#c7c35c"/><stop offset="0.3" stop-color="#dcd870"/><stop offset="0.5" stop-color="#d2ce69"/><stop offset="0.65" stop-color="#b0ad58"/><stop offset="0.8" stop-color="#7b7a3e"/><stop offset="0.92" stop-color="#4c4c2a"/><stop offset="1" stop-color="#45472a"/></linearGradient></defs><path d="M5 0h454v40A227 40 0 0 1 232 80 227 52 0 0 1 5 28z" fill="url(#cyl)"/></svg><div class="a" style="left:1293px;top:971px;width:176px;height:19px;background:rgba(30,5,5,0.22)"></div><div class="t" style="left:1295px;top:981px;font-size:12px;color:#d6e6b0;font-family:'Liberation Sans',sans-serif;transform:translate(0,-50%) scaleX(1.0113);transform-origin:0 50%;">Cumulated time</div><div class="t" style="left:1407px;top:981px;font-size:12px;color:#d6e6b0;font-family:'Liberation Sans',sans-serif;transform:translate(0,-50%) scaleX(0.9844);transform-origin:0 50%;">00h 00' 00"</div><div class="a" style="left:577px;top:993px;width:40px;height:17px;background:rgba(30,8,8,0.42);border:1px solid rgba(120,30,30,0.5)"></div><div class="a" style="left:621px;top:993px;width:95px;height:17px;background:rgba(30,8,8,0.42);border:1px solid rgba(120,30,30,0.5)"></div><div class="a" style="left:721px;top:993px;width:41px;height:17px;background:rgba(30,8,8,0.42);border:1px solid rgba(120,30,30,0.5)"></div><div class="a" style="left:766px;top:993px;width:98px;height:17px;background:rgba(30,8,8,0.42);border:1px solid rgba(120,30,30,0.5)"></div><div class="a" style="left:868px;top:993px;width:84px;height:17px;background:rgba(30,8,8,0.42);border:1px solid rgba(120,30,30,0.5)"></div><div class="a" style="left:957px;top:993px;width:85px;height:17px;background:rgba(30,8,8,0.42);border:1px solid rgba(120,30,30,0.5)"></div><div class="a" style="left:1047px;top:993px;width:85px;height:17px;background:rgba(30,8,8,0.42);border:1px solid rgba(120,30,30,0.5)"></div><div class="a" style="left:1137px;top:993px;width:81px;height:17px;background:rgba(30,8,8,0.42);border:1px solid rgba(120,30,30,0.5)"></div><div class="a" style="left:1222px;top:993px;width:80px;height:17px;background:rgba(30,8,8,0.42);border:1px solid rgba(120,30,30,0.5)"></div><div class="a" style="left:1307px;top:993px;width:80px;height:17px;background:rgba(30,8,8,0.42);border:1px solid rgba(120,30,30,0.5)"></div><div class="a" style="left:1392px;top:993px;width:75px;height:17px;background:rgba(30,8,8,0.42);border:1px solid rgba(120,30,30,0.5)"></div><svg class="a" style="left:1469px;top:185px" width="46" height="46" viewBox="0 0 46 46"><defs><radialGradient id="rg1" cx="0.4" cy="0.35" r="0.7"><stop offset="0" stop-color="#b8b8b8"/><stop offset="1" stop-color="#6a6a6a"/></radialGradient></defs><circle cx="23" cy="23" r="21" fill="url(#rg1)" stroke="#3a3a3a" stroke-width="2"/><rect x="13" y="19" width="18" height="13" rx="2" fill="#3c3c3c"/><rect x="17" y="16" width="7" height="4" fill="#3c3c3c"/><circle cx="21" cy="26" r="4" fill="#fff"/><circle cx="21" cy="26" r="2" fill="#3c3c3c"/><path d="M16 12l2 3M22 10v3M28 12l-2 3" stroke="#f28c1c" stroke-width="1.5"/><path d="M36 28l5 3v6l-5 3-5-3v-6z" fill="#fff" stroke="#333"/><path d="M36 22v12" stroke="#d21" stroke-width="2"/><path d="M36 34l-6 3" stroke="#1a1" stroke-width="2"/><path d="M36 34l6 3" stroke="#15d" stroke-width="2"/></svg><svg class="a" style="left:1486px;top:235px" width="13" height="8" viewBox="0 0 13 8"><path d="M1 1h11L6.5 7z" fill="none" stroke="#9a9a9a" stroke-width="1.2"/></svg><svg class="a" style="left:1469px;top:967px" width="46" height="46" viewBox="0 0 46 46"><defs><radialGradient id="rg2" cx="0.4" cy="0.35" r="0.7"><stop offset="0" stop-color="#b8b8b8"/><stop offset="1" stop-color="#6a6a6a"/></radialGradient></defs><circle cx="23" cy="23" r="21" fill="url(#rg2)" stroke="#3a3a3a" stroke-width="2"/><path d="M16 12h17v18H13v-8h3z" fill="#3d3d3d"/><rect x="18" y="14" width="13" height="7" fill="#e1e4ea"/><circle cx="15" cy="26" r="4" fill="#f2c10f"/><circle cx="15" cy="26" r="2.5" fill="#e31b1b"/><path d="M22 24h2M26 24h2M22 27h2M26 27h2" stroke="#22aa44" stroke-width="1.5"/><circle cx="35" cy="34" r="7" fill="#3a3a3a"/><rect x="32" y="30" width="6" height="8" rx="1" fill="#f2a21a"/></svg><div class="a" style="left:398px;top:1024px;width:1132px;height:36px;background:#fff"></div><div class="a" style="left:398px;top:1026px;width:1132px;height:6px;background:#efefef"></div><svg class="a" style="left:1457px;top:1043px" width="70" height="14" viewBox="0 0 70 14"><text x="6" y="11" font-size="12" fill="#555" text-anchor="middle" font-family="Liberation Sans">?</text><path d="M21 5h8l-4 5z" fill="#555"/><path d="M38 1h7M39 1v6h5V1M37 7h9M41.5 7v6" stroke="#555" stroke-width="1.3" fill="none"/><path d="M59 3l7 7M66 3l-7 7" stroke="#555" stroke-width="1.3"/></svg><div class="a" style="left:2px;top:1060px;width:1918px;height:20px;background:#2b579a"></div><div class="a" style="left:6px;top:1064px;width:16px;height:16px;background:#6cbb21"></div><div class="t" style="left:14px;top:1072.5px;font-size:11px;color:#fff;font-weight:bold;letter-spacing:-1px;font-family:'Liberation Sans',sans-serif;transform:translate(-50%,-50%);">NC</div><div class="t" style="left:37px;top:1071px;font-size:12px;color:#fff;font-family:'Liberation Sans',sans-serif;transform:translate(0,-50%);">Ready</div><div class="t" style="left:1843px;top:1071px;font-size:12px;color:#5b9be6;font-family:'Liberation Sans',sans-serif;transform:translate(0,-50%) scaleX(0.9316);transform-origin:0 50%;">CAP</div><div class="t" style="left:1870px;top:1071px;font-size:12px;color:#fff;font-family:'Liberation Sans',sans-serif;transform:translate(0,-50%) scaleX(0.9148);transform-origin:0 50%;">NUM</div><div class="t" style="left:1900px;top:1071px;font-size:12px;color:#5b9be6;font-family:'Liberation Sans',sans-serif;transform:translate(0,-50%) scaleX(0.8681);transform-origin:0 50%;">SCR</div><div class="a" style="left:2px;top:152px;width:6px;height:85px;background:#d0d0d0"></div><svg class="a" style="left:12px;top:152px" width="16" height="15" viewBox="0 0 16 15"><path d="M1 3a1 1 0 0 1 1-1h4l2 2h5a1 1 0 0 1 1 1v8H1z" fill="#a83232" stroke="#5a6a7a" stroke-width="1"/><rect x="8" y="7" width="6" height="8" fill="#f5a21a" stroke="#5a6a7a" stroke-width="0.8"/></svg><div class="t" style="left:19px;top:204px;font-size:12.5px;color:#333;transform:translate(-50%,-50%) rotate(90deg);">Process edit</div><div class="a" style="left:2px;top:258px;width:6px;height:56px;background:#d0d0d0"></div><svg class="a" style="left:12px;top:260px" width="16" height="14" viewBox="0 0 16 14"><path d="M1 3a1 1 0 0 1 1-1h4l2 2h6a1 1 0 0 1 1 1v8H1z" fill="#5f9a78" stroke="#5a6a7a" stroke-width="1"/></svg><div class="t" style="left:19px;top:296px;font-size:12.5px;color:#333;transform:translate(-50%,-50%) rotate(90deg);">Project</div><div class="t" style="left:38px;top:163px;font-size:18.5px;color:#2b7bd6;font-family:'Liberation Sans',sans-serif;transform:translate(0,-50%) scaleX(0.9922);transform-origin:0 50%;">Process edit</div><div class="t" style="left:325px;top:163px;font-size:13px;color:#555;font-family:'Liberation Sans',sans-serif;transform:translate(-50%,-50%);">?</div><svg class="a" style="left:339px;top:160px" width="9" height="6" viewBox="0 0 9 6"><path d="M0 0h9L4.5 5.5z" fill="#5a5a5a"/></svg><svg class="a" style="left:356px;top:156px" width="14" height="14" viewBox="0 0 14 14"><path d="M1 7h4M5 3v8M5 5h6v4H5M11 5v4" stroke="#555" stroke-width="1.4" fill="none"/></svg><svg class="a" style="left:376px;top:158px" width="11" height="11" viewBox="0 0 11 11"><path d="M1 1l9 9M10 1l-9 9" stroke="#555" stroke-width="1.4"/></svg><svg class="a" style="left:38px;top:190px" width="24" height="24" viewBox="0 0 24 24"><circle cx="11" cy="11" r="10.5" fill="#f57f0f"/><path d="M15.5 8.5A5.5 5.5 0 1 0 16 13" fill="none" stroke="#fff" stroke-width="2.4"/><path d="M12.5 6.5l5-1.5-0.5 5z" fill="#fff"/></svg><svg class="a" style="left:68px;top:190px" width="24" height="24" viewBox="0 0 24 24"><circle cx="11" cy="11" r="10.5" fill="#0b6b2e"/><path d="M15.5 8.5A5.5 5.5 0 1 0 16 13" fill="none" stroke="#fff" stroke-width="2.4"/><path d="M12.5 6.5l5-1.5-0.5 5z" fill="#fff"/></svg><svg class="a" style="left:98px;top:190px" width="24" height="24" viewBox="0 0 24 24"><circle cx="11" cy="11" r="10.5" fill="#e88080"/><path d="M15.5 8.5A5.5 5.5 0 1 0 16 13" fill="none" stroke="#fff" stroke-width="2.4"/><path d="M12.5 6.5l5-1.5-0.5 5z" fill="#fff"/></svg><svg class="a" style="left:130px;top:190px" width="24" height="24" viewBox="0 0 24 24"><circle cx="11" cy="11" r="10.5" fill="#8a8a8a"/><path d="M15.5 8.5A5.5 5.5 0 1 0 16 13" fill="none" stroke="#fff" stroke-width="2.4"/><path d="M12.5 6.5l5-1.5-0.5 5z" fill="#fff"/><circle cx="17" cy="17" r="4.5" fill="#f0c000" stroke="#f0c000"/><circle cx="17" cy="17" r="2.2" fill="none" stroke="#222" stroke-width="1.6"/></svg><svg class="a" style="left:159px;top:199px" width="7" height="4" viewBox="0 0 7 4"><path d="M0 0h7L3.5 4z" fill="#666"/></svg><svg class="a" style="left:171px;top:190px" width="24" height="24" viewBox="0 0 24 24"><rect x="2" y="2" width="17" height="17" rx="3" fill="#eef0f6" stroke="#5a6a7a" stroke-width="1.6"/><circle cx="17" cy="17" r="4.5" fill="#f0c000"/><circle cx="17" cy="17" r="2.2" fill="none" stroke="#222" stroke-width="1.6"/></svg><div class="a" style="left:328px;top:187px;width:28px;height:28px;background:#c5d7f0"></div><svg class="a" style="left:303px;top:190px" width="18" height="21" viewBox="0 0 18 21"><rect x="1.5" y="1.5" width="15" height="18" rx="2" fill="#fff" stroke="#808080" stroke-width="2.5"/><rect x="4" y="4" width="10" height="3" rx="1" fill="#000"/><rect x="4" y="9" width="10" height="3" rx="1" fill="#000"/><rect x="4" y="14" width="10" height="3" rx="1" fill="#000"/></svg><svg class="a" style="left:333px;top:190px" width="18" height="21" viewBox="0 0 18 21"><rect x="1.5" y="1.5" width="15" height="18" rx="2" fill="#fff" stroke="#808080" stroke-width="2.5"/><rect x="4" y="4" width="10" height="3" rx="1" fill="#888"/><rect x="4" y="9" width="10" height="3" rx="1" fill="#000"/><rect x="4" y="14" width="10" height="3" rx="1" fill="#000"/></svg><svg class="a" style="left:363px;top:190px" width="18" height="21" viewBox="0 0 18 21"><rect x="1.5" y="1.5" width="15" height="18" rx="2" fill="#fff" stroke="#808080" stroke-width="2.5"/><rect x="4" y="4" width="10" height="3" rx="1" fill="#888"/><rect x="4" y="9" width="10" height="3" rx="1" fill="#888"/><rect x="4" y="14" width="10" height="3" rx="1" fill="#000"/></svg><div class="a" style="left:0;top:0;width:375px;height:1009px;overflow:hidden"><svg class="a" style="left:34px;top:222px" width="23" height="20" viewBox="0 0 23 20"><path d="M1.5 4a2 2 0 0 1 2-2h6l2.5 2.5h8a2 2 0 0 1 2 2V17a2 2 0 0 1-2 2h-16a2 2 0 0 1-2-2z" fill="#5f9a78" stroke="#4f6174" stroke-width="1.8"/><path d="M2 8h19" stroke="#4f6174" stroke-width="1"/></svg><div class="t" style="left:75px;top:232.5px;font-size:12px;color:#222;font-family:'Liberation Sans',sans-serif;transform:translate(0,-50%) scaleX(0.8660);transform-origin:0 50%;">nightkingjlh</div><svg class="a" style="left:50px;top:250px" width="13" height="13" viewBox="0 0 13 13"><path d="M12 0v12H0z" fill="#7f7f7f"/></svg><svg class="a" style="left:71px;top:246px" width="22" height="21" viewBox="0 0 22 21"><path d="M1.5 3a2 2 0 0 1 2-2h5l2 2h6a2 2 0 0 1 2 2V15a2 2 0 0 1-2 2h-13a2 2 0 0 1-2-2z" fill="#a93434" stroke="#4f6174" stroke-width="1.6"/><path d="M2 7h16" stroke="#7a2020" stroke-width="1"/><path d="M12 10h6l3 3v7h-9z" fill="#f5a21a" stroke="#4f6174" stroke-width="1.2"/></svg><div class="t" style="left:111px;top:256.62px;font-size:12px;color:#222;font-family:'Liberation Sans',sans-serif;transform:translate(0,-50%) scaleX(0.8605);transform-origin:0 50%;">Programming process</div><svg class="a" style="left:86px;top:274px" width="13" height="13" viewBox="0 0 13 13"><path d="M12 0v12H0z" fill="#7f7f7f"/></svg><svg class="a" style="left:106px;top:271px" width="24" height="18" viewBox="0 0 24 18"><path d="M1 5l3-3h6v11l-3 3H1z" fill="#aab6c8" stroke="#56667a" stroke-width="1.3"/><path d="M7 5h-6M7 5l3-3M7 5v11" stroke="#56667a" stroke-width="1"/><rect x="2" y="9" width="3" height="2" fill="#fff"/><path d="M10 7l4-2" stroke="#56667a" stroke-width="1.3"/><rect x="14" y="1" width="7" height="7" fill="#aab6c8" stroke="#56667a" stroke-width="1.3"/></svg><div class="a" style="left:144px;top:269px;width:73px;height:23px;background:#cbd8e6"></div><div class="t" style="left:147px;top:280.74px;font-size:12px;color:#222;font-family:'Liberation Sans',sans-serif;transform:translate(0,-50%) scaleX(0.8967);transform-origin:0 50%;">Machine used</div><div class="a" style="left:88px;top:293px;width:1px;height:192px;border-left:1px dotted #a8a8a8"></div><svg class="a" style="left:122px;top:298px" width="13" height="13" viewBox="0 0 13 13"><path d="M12 0v12H0z" fill="#7f7f7f"/></svg><svg class="a" style="left:143px;top:293px" width="21" height="21" viewBox="0 0 21 21"><path d="M1 9v4a9.5 7.5 0 0 0 19 0V9z" fill="#6c7a8c"/><ellipse cx="10.5" cy="9" rx="9.5" ry="7.8" fill="#e2e6ec" stroke="#5c6a7c" stroke-width="1.8"/><path d="M5 4.5l11 9M16 4.5l-11 9" stroke="#5c6a7c" stroke-width="2"/><circle cx="10.5" cy="9" r="1.5" fill="#e2e6ec"/></svg><div class="t" style="left:184px;top:304.86px;font-size:12px;color:#222;font-family:'Liberation Sans',sans-serif;transform:translate(0,-50%) scaleX(0.9063);transform-origin:0 50%;">Table</div><svg class="a" style="left:158px;top:322px" width="13" height="13" viewBox="0 0 13 13"><path d="M12 0v12H0z" fill="#7f7f7f"/></svg><svg class="a" style="left:178px;top:318px" width="20" height="20" viewBox="0 0 20 20"><path d="M1 10C5 3.5 15 3.5 19 10C15 16.5 5 16.5 1 10z" fill="none" stroke="#9ca8bb" stroke-width="1.8"/><circle cx="10" cy="10" r="3.6" fill="none" stroke="#9ca8bb" stroke-width="1.8"/><path d="M16 2L4 18" stroke="#9ca8bb" stroke-width="1.8"/></svg><svg class="a" style="left:203px;top:318px" width="21" height="21" viewBox="0 0 21 21"><path d="M1.5 1h4v4h4l3 3v12h-11z" fill="#5f9a8f" stroke="#52677a" stroke-width="1.2"/><rect x="11" y="9" width="8" height="11" fill="#d4d9e3" stroke="#52677a" stroke-width="1.3"/></svg><div class="t" style="left:243px;top:328.98px;font-size:12px;color:#222;font-family:'Liberation Sans',sans-serif;transform:translate(0,-50%) scaleX(0.8745);transform-origin:0 50%;">Setup - Copy (1)</div><div class="a" style="left:196px;top:340px;width:1px;height:60px;border-left:1px dotted #a8a8a8"></div><div class="a" style="left:197px;top:352px;width:16px;height:1px;border-top:1px dotted #a8a8a8"></div><svg class="a" style="left:215px;top:342px" width="20" height="20" viewBox="0 0 20 20"><path d="M1 10C5 3.5 15 3.5 19 10C15 16.5 5 16.5 1 10z" fill="none" stroke="#9ca8bb" stroke-width="1.8"/><circle cx="10" cy="10" r="3.6" fill="none" stroke="#9ca8bb" stroke-width="1.8"/></svg><svg class="a" style="left:241px;top:343px" width="18" height="18" viewBox="0 0 18 18"><path d="M1 1h6v9h9v7H1z" fill="#f3c012" stroke="#6a5a2a" stroke-width="1.2"/></svg><div class="t" style="left:280px;top:353.1px;font-size:12px;color:#222;font-weight:bold;font-family:'Liberation Sans',sans-serif;transform:translate(0,-50%) scaleX(0.9929);transform-origin:0 50%;">Part (Pos. - Copy</div><div class="a" style="left:197px;top:376px;width:16px;height:1px;border-top:1px dotted #a8a8a8"></div><svg class="a" style="left:215px;top:366px" width="20" height="20" viewBox="0 0 20 20"><path d="M1 10C5 3.5 15 3.5 19 10C15 16.5 5 16.5 1 10z" fill="none" stroke="#9ca8bb" stroke-width="1.8"/><circle cx="10" cy="10" r="3.6" fill="none" stroke="#9ca8bb" stroke-width="1.8"/><path d="M16 2L4 18" stroke="#9ca8bb" stroke-width="1.8"/></svg><svg class="a" style="left:241px;top:367px" width="18" height="18" viewBox="0 0 18 18"><rect x="1.5" y="1.5" width="15" height="15" fill="#dde2ea" stroke="#7a8aa0" stroke-width="1.5"/></svg><div class="t" style="left:280px;top:377.22px;font-size:12px;color:#222;font-family:'Liberation Sans',sans-serif;transform:translate(0,-50%) scaleX(0.8569);transform-origin:0 50%;">Stock (Pos. (2) - Cop</div><div class="a" style="left:197px;top:400px;width:16px;height:1px;border-top:1px dotted #a8a8a8"></div><svg class="a" style="left:215px;top:391px" width="20" height="20" viewBox="0 0 20 20"><path d="M10 5l6 3.5v7L10 19l-6-3.5v-7z" fill="#fff" stroke="#6a7a8c" stroke-width="1.5"/><path d="M4 8.5l6 3.5 6-3.5M10 12v7" fill="none" stroke="#6a7a8c" stroke-width="1.2"/><path d="M10 12V3" stroke="#d21e1e" stroke-width="2.4"/><path d="M6.5 5L10 0l3.5 5z" fill="#d21e1e"/><path d="M10 13.5L2 18" stroke="#18a030" stroke-width="2.6"/><path d="M10 13.5l8 4.5" stroke="#1e5ad2" stroke-width="2.6"/></svg><div class="t" style="left:255px;top:401.34000000000003px;font-size:12px;color:#222;font-family:'Liberation Sans',sans-serif;transform:translate(0,-50%) scaleX(0.9253);transform-origin:0 50%;">ken_compact_b_tch_19[</div><div class="a" style="left:89px;top:424px;width:15px;height:1px;border-top:1px dotted #a8a8a8"></div><svg class="a" style="left:107px;top:416px" width="20" height="20" viewBox="0 0 20 20"><path d="M10 5l6 3.5v7L10 19l-6-3.5v-7z" fill="#fff" stroke="#6a7a8c" stroke-width="1.5"/><path d="M4 8.5l6 3.5 6-3.5M10 12v7" fill="none" stroke="#6a7a8c" stroke-width="1.2"/><path d="M10 12V3" stroke="#d21e1e" stroke-width="2.4"/><path d="M6.5 5L10 0l3.5 5z" fill="#d21e1e"/><path d="M10 13.5L2 18" stroke="#18a030" stroke-width="2.6"/><path d="M10 13.5l8 4.5" stroke="#1e5ad2" stroke-width="2.6"/></svg><div class="t" style="left:147px;top:425.46000000000004px;font-size:12px;color:#222;font-family:'Liberation Sans',sans-serif;transform:translate(0,-50%) scaleX(0.8418);transform-origin:0 50%;">Origins</div><svg class="a" style="left:86px;top:443px" width="13" height="13" viewBox="0 0 13 13"><path d="M12 0v12H0z" fill="#7f7f7f"/></svg><svg class="a" style="left:107px;top:439px" width="20" height="20" viewBox="0 0 20 20"><path d="M1 10C5 3.5 15 3.5 19 10C15 16.5 5 16.5 1 10z" fill="none" stroke="#9ca8bb" stroke-width="1.8"/><circle cx="10" cy="10" r="3.6" fill="none" stroke="#9ca8bb" stroke-width="1.8"/></svg><svg class="a" style="left:131px;top:437px" width="26" height="24" viewBox="0 0 26 24"><path d="M16.48 7.35L19.21 7.67L19.21 12.33L16.48 12.65L16.46 12.70L18.16 14.87L14.87 18.16L12.70 16.46L12.65 16.48L12.33 19.21L7.67 19.21L7.35 16.48L7.30 16.46L5.13 18.16L1.84 14.87L3.54 12.70L3.52 12.65L0.79 12.33L0.79 7.67L3.52 7.35L3.54 7.30L1.84 5.13L5.13 1.84L7.30 3.54L7.35 3.52L7.67 0.79L12.33 0.79L12.65 3.52L12.70 3.54L14.87 1.84L18.16 5.13L16.46 7.30Z" fill="#8d9bb0" stroke="#5a6a7e" stroke-width="1.2" stroke-linejoin="round"/><circle cx="10" cy="10" r="2.8" fill="#fff"/><path d="M13 11h7l-1.5 3h-4z" fill="#167a3c"/><rect x="15" y="14" width="2.5" height="3" fill="#5fc8e0"/><rect x="15" y="17" width="2.5" height="2.5" fill="#f48a1c"/></svg><div class="a" style="left:155px;top:452px;width:8px;height:8px;background:#0c7a2a"></div><div class="t" style="left:171px;top:449.58000000000004px;font-size:12px;color:#222;font-family:'Liberation Sans',sans-serif;transform:translate(0,-50%) scaleX(0.8787);transform-origin:0 50%;">Tool magazine</div><div class="a" style="left:124px;top:462px;width:1px;height:12px;border-left:1px dotted #a8a8a8"></div><div class="a" style="left:125px;top:473px;width:16px;height:1px;border-top:1px dotted #a8a8a8"></div><svg class="a" style="left:145px;top:462px" width="18" height="25" viewBox="0 0 18 25"><path d="M1.5 1.5h10l5 5v17h-15z" fill="#eef0f4" stroke="#8090a5" stroke-width="1.6" stroke-linejoin="round"/><path d="M4 8h8M4 11h9M4 14h9M4 17h9M4 20h9" stroke="#c8cdd8" stroke-width="1"/></svg><div class="t" style="left:183px;top:473.70000000000005px;font-size:12px;color:#222;font-family:'Liberation Sans',sans-serif;transform:translate(0,-50%) scaleX(0.8802);transform-origin:0 50%;">Lib_nightkingjlh_0.tlib</div><svg class="a" style="left:86px;top:491px" width="13" height="13" viewBox="0 0 13 13"><path d="M12 0v12H0z" fill="#7f7f7f"/></svg><svg class="a" style="left:107px;top:487px" width="20" height="20" viewBox="0 0 20 20"><path d="M1 10C5 3.5 15 3.5 19 10C15 16.5 5 16.5 1 10z" fill="none" stroke="#9ca8bb" stroke-width="1.8"/><circle cx="10" cy="10" r="3.6" fill="none" stroke="#9ca8bb" stroke-width="1.8"/></svg><svg class="a" style="left:131px;top:487px" width="22" height="20" viewBox="0 0 22 20"><path d="M1.5 4a2 2 0 0 1 2-2h5l2.5 2.5h7a2 2 0 0 1 2 2V16a2 2 0 0 1-2 2h-14a2 2 0 0 1-2-2z" fill="#8f5bb8" stroke="#4f6174" stroke-width="1.6"/><path d="M2 8h17" stroke="#5c3a80" stroke-width="1"/></svg><div class="t" style="left:171px;top:497.82px;font-size:12px;color:#222;font-family:'Liberation Sans',sans-serif;transform:translate(0,-50%) scaleX(0.8767);transform-origin:0 50%;">Group of operations</div><div class="a" style="left:124px;top:510px;width:1px;height:499px;border-left:1px dotted #a8a8a8"></div><div class="a" style="left:125px;top:521px;width:16px;height:1px;border-top:1px dotted #a8a8a8"></div><svg class="a" style="left:145px;top:512px" width="17" height="17" viewBox="0 0 17 17"><rect x="1" y="1" width="15" height="15" fill="#fff" stroke="#a0a8b4" stroke-width="1"/><path d="M4 9l3 4 6-9" stroke="#2aa040" stroke-width="1.3" fill="none"/></svg><svg class="a" style="left:167px;top:510px" width="22" height="20" viewBox="0 0 22 20"><path d="M5 1h15v14H3v-6h2z" fill="#3d3d3d"/><rect x="7" y="3" width="11" height="6" fill="#e1e4ea"/><circle cx="5" cy="13" r="4.5" fill="#f2c10f" stroke="#3d3d3d" stroke-width="1"/><circle cx="5" cy="13" r="2.5" fill="#e31b1b"/><path d="M11 11h2M15 11h2M11 14h2M15 14h2" stroke="#22aa44" stroke-width="1.5"/></svg><div class="a" style="left:191px;top:524px;width:8px;height:8px;background:#0c7a2a"></div><div class="t" style="left:207px;top:521.94px;font-size:12px;color:#222;font-family:'Liberation Sans',sans-serif;transform:translate(0,-50%) scaleX(0.8798);transform-origin:0 50%;">PrgID</div><div class="a" style="left:125px;top:545px;width:16px;height:1px;border-top:1px dotted #a8a8a8"></div><svg class="a" style="left:143px;top:535px" width="20" height="20" viewBox="0 0 20 20"><path d="M1 10C5 3.5 15 3.5 19 10C15 16.5 5 16.5 1 10z" fill="none" stroke="#9ca8bb" stroke-width="1.8"/><circle cx="10" cy="10" r="3.6" fill="none" stroke="#9ca8bb" stroke-width="1.8"/></svg><svg class="a" style="left:169px;top:534px" width="18" height="25" viewBox="0 0 18 25"><path d="M1.5 1.5h10l5 5v17h-15z" fill="#eef0f4" stroke="#8090a5" stroke-width="1.6" stroke-linejoin="round"/><path d="M4 8h8M4 11h9M4 14h9M4 17h9M4 20h9" stroke="#c8cdd8" stroke-width="1"/></svg><svg class="a" style="left:190px;top:536px" width="10" height="9" viewBox="0 0 10 9"><path d="M1 0h8L7 3H3z" fill="#167a3c"/><rect x="3.5" y="3" width="3" height="2" fill="#5fa8b0"/><rect x="3.5" y="5" width="3" height="2.5" fill="#f48a1c"/></svg><div class="a" style="left:191px;top:548px;width:8px;height:8px;background:#0c7a2a"></div><div class="t" style="left:207px;top:546.06px;font-size:12px;color:#222;font-family:'Liberation Sans',sans-serif;transform:translate(0,-50%) scaleX(0.9);transform-origin:0 50%;">Sequence 1 T1 - 3 axis</div><div class="a" style="left:125px;top:569px;width:16px;height:1px;border-top:1px dotted #a8a8a8"></div><svg class="a" style="left:143px;top:559px" width="20" height="20" viewBox="0 0 20 20"><path d="M1 10C5 3.5 15 3.5 19 10C15 16.5 5 16.5 1 10z" fill="none" stroke="#9ca8bb" stroke-width="1.8"/><circle cx="10" cy="10" r="3.6" fill="none" stroke="#9ca8bb" stroke-width="1.8"/></svg><svg class="a" style="left:169px;top:558px" width="18" height="25" viewBox="0 0 18 25"><path d="M1.5 1.5h10l5 5v17h-15z" fill="#eef0f4" stroke="#8090a5" stroke-width="1.6" stroke-linejoin="round"/><path d="M4 8h8M4 11h9M4 14h9M4 17h9M4 20h9" stroke="#c8cdd8" stroke-width="1"/></svg><div class="a" style="left:191px;top:572px;width:8px;height:8px;background:#0c7a2a"></div><div class="t" style="left:207px;top:570.1800000000001px;font-size:12px;color:#222;font-family:'Liberation Sans',sans-serif;transform:translate(0,-50%) scaleX(0.9);transform-origin:0 50%;">Sequence 2 T1</div><div class="a" style="left:125px;top:593px;width:16px;height:1px;border-top:1px dotted #a8a8a8"></div><svg class="a" style="left:143px;top:583px" width="20" height="20" viewBox="0 0 20 20"><path d="M1 10C5 3.5 15 3.5 19 10C15 16.5 5 16.5 1 10z" fill="none" stroke="#9ca8bb" stroke-width="1.8"/><circle cx="10" cy="10" r="3.6" fill="none" stroke="#9ca8bb" stroke-width="1.8"/></svg><svg class="a" style="left:169px;top:582px" width="18" height="25" viewBox="0 0 18 25"><path d="M1.5 1.5h10l5 5v17h-15z" fill="#eef0f4" stroke="#8090a5" stroke-width="1.6" stroke-linejoin="round"/><path d="M4 8h8M4 11h9M4 14h9M4 17h9M4 20h9" stroke="#c8cdd8" stroke-width="1"/></svg><div class="a" style="left:191px;top:596px;width:8px;height:8px;background:#0c7a2a"></div><div class="t" style="left:207px;top:594.3px;font-size:12px;color:#222;font-family:'Liberation Sans',sans-serif;transform:translate(0,-50%) scaleX(0.9);transform-origin:0 50%;">Sequence 4 T1</div><div class="a" style="left:125px;top:617px;width:16px;height:1px;border-top:1px dotted #a8a8a8"></div><svg class="a" style="left:143px;top:607px" width="20" height="20" viewBox="0 0 20 20"><path d="M1 10C5 3.5 15 3.5 19 10C15 16.5 5 16.5 1 10z" fill="none" stroke="#9ca8bb" stroke-width="1.8"/><circle cx="10" cy="10" r="3.6" fill="none" stroke="#9ca8bb" stroke-width="1.8"/></svg><svg class="a" style="left:169px;top:606px" width="18" height="25" viewBox="0 0 18 25"><path d="M1.5 1.5h10l5 5v17h-15z" fill="#eef0f4" stroke="#8090a5" stroke-width="1.6" stroke-linejoin="round"/><path d="M4 8h8M4 11h9M4 14h9M4 17h9M4 20h9" stroke="#c8cdd8" stroke-width="1"/></svg><div class="a" style="left:191px;top:620px;width:8px;height:8px;background:#0c7a2a"></div><div class="t" style="left:207px;top:618.4200000000001px;font-size:12px;color:#222;font-family:'Liberation Sans',sans-serif;transform:translate(0,-50%) scaleX(0.9);transform-origin:0 50%;">Sequence 6 T1</div><div class="a" style="left:125px;top:642px;width:16px;height:1px;border-top:1px dotted #a8a8a8"></div><svg class="a" style="left:143px;top:632px" width="20" height="20" viewBox="0 0 20 20"><path d="M1 10C5 3.5 15 3.5 19 10C15 16.5 5 16.5 1 10z" fill="none" stroke="#9ca8bb" stroke-width="1.8"/><circle cx="10" cy="10" r="3.6" fill="none" stroke="#9ca8bb" stroke-width="1.8"/></svg><svg class="a" style="left:169px;top:631px" width="18" height="25" viewBox="0 0 18 25"><path d="M1.5 1.5h10l5 5v17h-15z" fill="#eef0f4" stroke="#8090a5" stroke-width="1.6" stroke-linejoin="round"/><path d="M4 8h8M4 11h9M4 14h9M4 17h9M4 20h9" stroke="#c8cdd8" stroke-width="1"/></svg><svg class="a" style="left:190px;top:633px" width="10" height="9" viewBox="0 0 10 9"><path d="M1 0h8L7 3H3z" fill="#167a3c"/><rect x="3.5" y="3" width="3" height="2" fill="#5fa8b0"/><rect x="3.5" y="5" width="3" height="2.5" fill="#f48a1c"/></svg><div class="a" style="left:191px;top:645px;width:8px;height:8px;background:#0c7a2a"></div><div class="t" style="left:207px;top:642.54px;font-size:12px;color:#222;font-family:'Liberation Sans',sans-serif;transform:translate(0,-50%) scaleX(0.9);transform-origin:0 50%;">Sequence 7 T2</div><div class="a" style="left:125px;top:666px;width:16px;height:1px;border-top:1px dotted #a8a8a8"></div><svg class="a" style="left:143px;top:656px" width="20" height="20" viewBox="0 0 20 20"><path d="M1 10C5 3.5 15 3.5 19 10C15 16.5 5 16.5 1 10z" fill="none" stroke="#9ca8bb" stroke-width="1.8"/><circle cx="10" cy="10" r="3.6" fill="none" stroke="#9ca8bb" stroke-width="1.8"/></svg><svg class="a" style="left:169px;top:655px" width="18" height="25" viewBox="0 0 18 25"><path d="M1.5 1.5h10l5 5v17h-15z" fill="#eef0f4" stroke="#8090a5" stroke-width="1.6" stroke-linejoin="round"/><path d="M4 8h8M4 11h9M4 14h9M4 17h9M4 20h9" stroke="#c8cdd8" stroke-width="1"/></svg><div class="a" style="left:191px;top:669px;width:8px;height:8px;background:#0c7a2a"></div><div class="t" style="left:207px;top:666.6600000000001px;font-size:12px;color:#222;font-family:'Liberation Sans',sans-serif;transform:translate(0,-50%) scaleX(0.9);transform-origin:0 50%;">Sequence 9 T2</div><div class="a" style="left:125px;top:690px;width:16px;height:1px;border-top:1px dotted #a8a8a8"></div><svg class="a" style="left:143px;top:680px" width="20" height="20" viewBox="0 0 20 20"><path d="M1 10C5 3.5 15 3.5 19 10C15 16.5 5 16.5 1 10z" fill="none" stroke="#9ca8bb" stroke-width="1.8"/><circle cx="10" cy="10" r="3.6" fill="none" stroke="#9ca8bb" stroke-width="1.8"/></svg><svg class="a" style="left:169px;top:679px" width="18" height="25" viewBox="0 0 18 25"><path d="M1.5 1.5h10l5 5v17h-15z" fill="#eef0f4" stroke="#8090a5" stroke-width="1.6" stroke-linejoin="round"/><path d="M4 8h8M4 11h9M4 14h9M4 17h9M4 20h9" stroke="#c8cdd8" stroke-width="1"/></svg><div class="a" style="left:191px;top:693px;width:8px;height:8px;background:#0c7a2a"></div><div class="t" style="left:207px;top:690.78px;font-size:12px;color:#222;font-family:'Liberation Sans',sans-serif;transform:translate(0,-50%) scaleX(0.9);transform-origin:0 50%;">Sequence 11 T2</div><div class="a" style="left:125px;top:714px;width:16px;height:1px;border-top:1px dotted #a8a8a8"></div><svg class="a" style="left:143px;top:704px" width="20" height="20" viewBox="0 0 20 20"><path d="M1 10C5 3.5 15 3.5 19 10C15 16.5 5 16.5 1 10z" fill="none" stroke="#9ca8bb" stroke-width="1.8"/><circle cx="10" cy="10" r="3.6" fill="none" stroke="#9ca8bb" stroke-width="1.8"/></svg><svg class="a" style="left:169px;top:703px" width="18" height="25" viewBox="0 0 18 25"><path d="M1.5 1.5h10l5 5v17h-15z" fill="#eef0f4" stroke="#8090a5" stroke-width="1.6" stroke-linejoin="round"/><path d="M4 8h8M4 11h9M4 14h9M4 17h9M4 20h9" stroke="#c8cdd8" stroke-width="1"/></svg><svg class="a" style="left:190px;top:705px" width="10" height="9" viewBox="0 0 10 9"><path d="M1 0h8L7 3H3z" fill="#167a3c"/><rect x="3.5" y="3" width="3" height="2" fill="#5fa8b0"/><rect x="3.5" y="5" width="3" height="2.5" fill="#f48a1c"/></svg><div class="a" style="left:191px;top:717px;width:8px;height:8px;background:#0c7a2a"></div><div class="t" style="left:207px;top:714.9000000000001px;font-size:12px;color:#222;font-family:'Liberation Sans',sans-serif;transform:translate(0,-50%) scaleX(0.9);transform-origin:0 50%;">Sequence 13 T3</div><div class="a" style="left:125px;top:738px;width:16px;height:1px;border-top:1px dotted #a8a8a8"></div><svg class="a" style="left:143px;top:728px" width="20" height="20" viewBox="0 0 20 20"><path d="M1 10C5 3.5 15 3.5 19 10C15 16.5 5 16.5 1 10z" fill="none" stroke="#9ca8bb" stroke-width="1.8"/><circle cx="10" cy="10" r="3.6" fill="none" stroke="#9ca8bb" stroke-width="1.8"/></svg><svg class="a" style="left:169px;top:727px" width="18" height="25" viewBox="0 0 18 25"><path d="M1.5 1.5h10l5 5v17h-15z" fill="#eef0f4" stroke="#8090a5" stroke-width="1.6" stroke-linejoin="round"/><path d="M4 8h8M4 11h9M4 14h9M4 17h9M4 20h9" stroke="#c8cdd8" stroke-width="1"/></svg><div class="a" style="left:191px;top:741px;width:8px;height:8px;background:#0c7a2a"></div><div class="t" style="left:207px;top:739.02px;font-size:12px;color:#222;font-family:'Liberation Sans',sans-serif;transform:translate(0,-50%) scaleX(0.9);transform-origin:0 50%;">Sequence 14 T3</div><div class="a" style="left:125px;top:762px;width:16px;height:1px;border-top:1px dotted #a8a8a8"></div><svg class="a" style="left:143px;top:752px" width="20" height="20" viewBox="0 0 20 20"><path d="M1 10C5 3.5 15 3.5 19 10C15 16.5 5 16.5 1 10z" fill="none" stroke="#9ca8bb" stroke-width="1.8"/><circle cx="10" cy="10" r="3.6" fill="none" stroke="#9ca8bb" stroke-width="1.8"/></svg><svg class="a" style="left:169px;top:751px" width="18" height="25" viewBox="0 0 18 25"><path d="M1.5 1.5h10l5 5v17h-15z" fill="#eef0f4" stroke="#8090a5" stroke-width="1.6" stroke-linejoin="round"/><path d="M4 8h8M4 11h9M4 14h9M4 17h9M4 20h9" stroke="#c8cdd8" stroke-width="1"/></svg><div class="a" style="left:191px;top:765px;width:8px;height:8px;background:#0c7a2a"></div><div class="t" style="left:207px;top:763.14px;font-size:12px;color:#222;font-family:'Liberation Sans',sans-serif;transform:translate(0,-50%) scaleX(0.9);transform-origin:0 50%;">Sequence 16 T3</div><div class="a" style="left:125px;top:786px;width:16px;height:1px;border-top:1px dotted #a8a8a8"></div><svg class="a" style="left:143px;top:776px" width="20" height="20" viewBox="0 0 20 20"><path d="M1 10C5 3.5 15 3.5 19 10C15 16.5 5 16.5 1 10z" fill="none" stroke="#9ca8bb" stroke-width="1.8"/><circle cx="10" cy="10" r="3.6" fill="none" stroke="#9ca8bb" stroke-width="1.8"/></svg><svg class="a" style="left:169px;top:775px" width="18" height="25" viewBox="0 0 18 25"><path d="M1.5 1.5h10l5 5v17h-15z" fill="#eef0f4" stroke="#8090a5" stroke-width="1.6" stroke-linejoin="round"/><path d="M4 8h8M4 11h9M4 14h9M4 17h9M4 20h9" stroke="#c8cdd8" stroke-width="1"/></svg><div class="a" style="left:191px;top:789px;width:8px;height:8px;background:#0c7a2a"></div><div class="t" style="left:207px;top:787.26px;font-size:12px;color:#222;font-family:'Liberation Sans',sans-serif;transform:translate(0,-50%) scaleX(0.9);transform-origin:0 50%;">Sequence 17 T3 - 5 axis</div><div class="a" style="left:125px;top:810px;width:16px;height:1px;border-top:1px dotted #a8a8a8"></div><svg class="a" style="left:143px;top:800px" width="20" height="20" viewBox="0 0 20 20"><path d="M1 10C5 3.5 15 3.5 19 10C15 16.5 5 16.5 1 10z" fill="none" stroke="#9ca8bb" stroke-width="1.8"/><circle cx="10" cy="10" r="3.6" fill="none" stroke="#9ca8bb" stroke-width="1.8"/></svg><svg class="a" style="left:169px;top:799px" width="18" height="25" viewBox="0 0 18 25"><path d="M1.5 1.5h10l5 5v17h-15z" fill="#eef0f4" stroke="#8090a5" stroke-width="1.6" stroke-linejoin="round"/><path d="M4 8h8M4 11h9M4 14h9M4 17h9M4 20h9" stroke="#c8cdd8" stroke-width="1"/></svg><div class="a" style="left:191px;top:813px;width:8px;height:8px;background:#0c7a2a"></div><div class="t" style="left:207px;top:811.38px;font-size:12px;color:#222;font-family:'Liberation Sans',sans-serif;transform:translate(0,-50%) scaleX(0.9);transform-origin:0 50%;">Sequence 18 T3 - 3 axis</div><div class="a" style="left:125px;top:835px;width:16px;height:1px;border-top:1px dotted #a8a8a8"></div><svg class="a" style="left:143px;top:825px" width="20" height="20" viewBox="0 0 20 20"><path d="M1 10C5 3.5 15 3.5 19 10C15 16.5 5 16.5 1 10z" fill="none" stroke="#9ca8bb" stroke-width="1.8"/><circle cx="10" cy="10" r="3.6" fill="none" stroke="#9ca8bb" stroke-width="1.8"/></svg><svg class="a" style="left:169px;top:824px" width="18" height="25" viewBox="0 0 18 25"><path d="M1.5 1.5h10l5 5v17h-15z" fill="#eef0f4" stroke="#8090a5" stroke-width="1.6" stroke-linejoin="round"/><path d="M4 8h8M4 11h9M4 14h9M4 17h9M4 20h9" stroke="#c8cdd8" stroke-width="1"/></svg><div class="a" style="left:191px;top:838px;width:8px;height:8px;background:#0c7a2a"></div><div class="t" style="left:207px;top:835.5px;font-size:12px;color:#222;font-family:'Liberation Sans',sans-serif;transform:translate(0,-50%) scaleX(0.9);transform-origin:0 50%;">Sequence 19 T3 - 5 axis</div><div class="a" style="left:125px;top:859px;width:16px;height:1px;border-top:1px dotted #a8a8a8"></div><svg class="a" style="left:143px;top:849px" width="20" height="20" viewBox="0 0 20 20"><path d="M1 10C5 3.5 15 3.5 19 10C15 16.5 5 16.5 1 10z" fill="none" stroke="#9ca8bb" stroke-width="1.8"/><circle cx="10" cy="10" r="3.6" fill="none" stroke="#9ca8bb" stroke-width="1.8"/></svg><svg class="a" style="left:169px;top:848px" width="18" height="25" viewBox="0 0 18 25"><path d="M1.5 1.5h10l5 5v17h-15z" fill="#eef0f4" stroke="#8090a5" stroke-width="1.6" stroke-linejoin="round"/><path d="M4 8h8M4 11h9M4 14h9M4 17h9M4 20h9" stroke="#c8cdd8" stroke-width="1"/></svg><div class="a" style="left:191px;top:862px;width:8px;height:8px;background:#0c7a2a"></div><div class="t" style="left:207px;top:859.62px;font-size:12px;color:#222;font-family:'Liberation Sans',sans-serif;transform:translate(0,-50%) scaleX(0.9);transform-origin:0 50%;">Sequence 20 T3 - 3 axis</div><div class="a" style="left:125px;top:883px;width:16px;height:1px;border-top:1px dotted #a8a8a8"></div><svg class="a" style="left:143px;top:873px" width="20" height="20" viewBox="0 0 20 20"><path d="M1 10C5 3.5 15 3.5 19 10C15 16.5 5 16.5 1 10z" fill="none" stroke="#9ca8bb" stroke-width="1.8"/><circle cx="10" cy="10" r="3.6" fill="none" stroke="#9ca8bb" stroke-width="1.8"/></svg><svg class="a" style="left:169px;top:872px" width="18" height="25" viewBox="0 0 18 25"><path d="M1.5 1.5h10l5 5v17h-15z" fill="#eef0f4" stroke="#8090a5" stroke-width="1.6" stroke-linejoin="round"/><path d="M4 8h8M4 11h9M4 14h9M4 17h9M4 20h9" stroke="#c8cdd8" stroke-width="1"/></svg><div class="a" style="left:191px;top:886px;width:8px;height:8px;background:#0c7a2a"></div><div class="t" style="left:207px;top:883.74px;font-size:12px;color:#222;font-family:'Liberation Sans',sans-serif;transform:translate(0,-50%) scaleX(0.9);transform-origin:0 50%;">Sequence 21 T3 - 5 axis</div><div class="a" style="left:125px;top:907px;width:16px;height:1px;border-top:1px dotted #a8a8a8"></div><svg class="a" style="left:143px;top:897px" width="20" height="20" viewBox="0 0 20 20"><path d="M1 10C5 3.5 15 3.5 19 10C15 16.5 5 16.5 1 10z" fill="none" stroke="#9ca8bb" stroke-width="1.8"/><circle cx="10" cy="10" r="3.6" fill="none" stroke="#9ca8bb" stroke-width="1.8"/></svg><svg class="a" style="left:169px;top:896px" width="18" height="25" viewBox="0 0 18 25"><path d="M1.5 1.5h10l5 5v17h-15z" fill="#eef0f4" stroke="#8090a5" stroke-width="1.6" stroke-linejoin="round"/><path d="M4 8h8M4 11h9M4 14h9M4 17h9M4 20h9" stroke="#c8cdd8" stroke-width="1"/></svg><div class="a" style="left:191px;top:910px;width:8px;height:8px;background:#0c7a2a"></div><div class="t" style="left:207px;top:907.86px;font-size:12px;color:#222;font-family:'Liberation Sans',sans-serif;transform:translate(0,-50%) scaleX(0.9);transform-origin:0 50%;">Sequence 22 T3</div><div class="a" style="left:125px;top:931px;width:16px;height:1px;border-top:1px dotted #a8a8a8"></div><svg class="a" style="left:143px;top:921px" width="20" height="20" viewBox="0 0 20 20"><path d="M1 10C5 3.5 15 3.5 19 10C15 16.5 5 16.5 1 10z" fill="none" stroke="#9ca8bb" stroke-width="1.8"/><circle cx="10" cy="10" r="3.6" fill="none" stroke="#9ca8bb" stroke-width="1.8"/></svg><svg class="a" style="left:169px;top:920px" width="18" height="25" viewBox="0 0 18 25"><path d="M1.5 1.5h10l5 5v17h-15z" fill="#eef0f4" stroke="#8090a5" stroke-width="1.6" stroke-linejoin="round"/><path d="M4 8h8M4 11h9M4 14h9M4 17h9M4 20h9" stroke="#c8cdd8" stroke-width="1"/></svg><div class="a" style="left:191px;top:934px;width:8px;height:8px;background:#0c7a2a"></div><div class="t" style="left:207px;top:931.98px;font-size:12px;color:#222;font-family:'Liberation Sans',sans-serif;transform:translate(0,-50%) scaleX(0.9);transform-origin:0 50%;">Sequence 23 T3</div><div class="a" style="left:125px;top:955px;width:16px;height:1px;border-top:1px dotted #a8a8a8"></div><svg class="a" style="left:143px;top:945px" width="20" height="20" viewBox="0 0 20 20"><path d="M1 10C5 3.5 15 3.5 19 10C15 16.5 5 16.5 1 10z" fill="none" stroke="#9ca8bb" stroke-width="1.8"/><circle cx="10" cy="10" r="3.6" fill="none" stroke="#9ca8bb" stroke-width="1.8"/></svg><svg class="a" style="left:169px;top:944px" width="18" height="25" viewBox="0 0 18 25"><path d="M1.5 1.5h10l5 5v17h-15z" fill="#eef0f4" stroke="#8090a5" stroke-width="1.6" stroke-linejoin="round"/><path d="M4 8h8M4 11h9M4 14h9M4 17h9M4 20h9" stroke="#c8cdd8" stroke-width="1"/></svg><div class="a" style="left:191px;top:958px;width:8px;height:8px;background:#0c7a2a"></div><div class="t" style="left:207px;top:956.1px;font-size:12px;color:#222;font-family:'Liberation Sans',sans-serif;transform:translate(0,-50%) scaleX(0.9);transform-origin:0 50%;">Sequence 24 T3</div><div class="a" style="left:125px;top:979px;width:16px;height:1px;border-top:1px dotted #a8a8a8"></div><svg class="a" style="left:143px;top:969px" width="20" height="20" viewBox="0 0 20 20"><path d="M1 10C5 3.5 15 3.5 19 10C15 16.5 5 16.5 1 10z" fill="none" stroke="#9ca8bb" stroke-width="1.8"/><circle cx="10" cy="10" r="3.6" fill="none" stroke="#9ca8bb" stroke-width="1.8"/></svg><svg class="a" style="left:169px;top:968px" width="18" height="25" viewBox="0 0 18 25"><path d="M1.5 1.5h10l5 5v17h-15z" fill="#eef0f4" stroke="#8090a5" stroke-width="1.6" stroke-linejoin="round"/><path d="M4 8h8M4 11h9M4 14h9M4 17h9M4 20h9" stroke="#c8cdd8" stroke-width="1"/></svg><div class="a" style="left:191px;top:982px;width:8px;height:8px;background:#0c7a2a"></div><div class="t" style="left:207px;top:980.22px;font-size:12px;color:#222;font-family:'Liberation Sans',sans-serif;transform:translate(0,-50%) scaleX(0.9);transform-origin:0 50%;">Sequence 25 T3</div><div class="a" style="left:125px;top:1003px;width:16px;height:1px;border-top:1px dotted #a8a8a8"></div><svg class="a" style="left:143px;top:993px" width="20" height="20" viewBox="0 0 20 20"><path d="M1 10C5 3.5 15 3.5 19 10C15 16.5 5 16.5 1 10z" fill="none" stroke="#9ca8bb" stroke-width="1.8"/><circle cx="10" cy="10" r="3.6" fill="none" stroke="#9ca8bb" stroke-width="1.8"/></svg><svg class="a" style="left:169px;top:992px" width="18" height="25" viewBox="0 0 18 25"><path d="M1.5 1.5h10l5 5v17h-15z" fill="#eef0f4" stroke="#8090a5" stroke-width="1.6" stroke-linejoin="round"/><path d="M4 8h8M4 11h9M4 14h9M4 17h9M4 20h9" stroke="#c8cdd8" stroke-width="1"/></svg><div class="a" style="left:191px;top:1006px;width:8px;height:8px;background:#0c7a2a"></div><div class="t" style="left:207px;top:1004.34px;font-size:12px;color:#222;font-family:'Liberation Sans',sans-serif;transform:translate(0,-50%) scaleX(0.9);transform-origin:0 50%;">Sequence 26 T3</div></div><div class="a" style="left:375px;top:221px;width:16px;height:788px;background:#f7f7f7"></div><div class="a" style="left:375px;top:221px;width:16px;height:17px;background:#f0f0f0;border:1px solid #e0e0e0"></div><svg class="a" style="left:378px;top:225px" width="10" height="8" viewBox="0 0 10 8"><path d="M1 7L5 2l4 5z" fill="#000"/></svg><div class="a" style="left:375px;top:238px;width:16px;height:366px;background:#efefef;border-right:1px solid #bbb;border-bottom:2px solid #8a8a8a;border-left:1px solid #e3e3e3"></div><div class="a" style="left:375px;top:993px;width:16px;height:16px;background:#f0f0f0;border-right:1px solid #aaa;border-bottom:1px solid #aaa"></div><svg class="a" style="left:378px;top:997px" width="10" height="8" viewBox="0 0 10 8"><path d="M1 1l4 5 4-5z" fill="#000"/></svg><div class="a" style="left:33px;top:1009px;width:342px;height:17px;background:#f4f4f4"></div><div class="a" style="left:33px;top:1009px;width:16px;height:17px;background:#f0f0f0;border-right:1px solid #8a8a8a;border-bottom:1px solid #aaa"></div><svg class="a" style="left:36px;top:1013px" width="10" height="10" viewBox="0 0 10 10"><path d="M7 1L2 5l5 4z" fill="#000"/></svg><div class="a" style="left:49px;top:1009px;width:195px;height:17px;background:#eaeaea;border-right:2px solid #8a8a8a;border-bottom:1px solid #bbb"></div><div class="a" style="left:359px;top:1009px;width:16px;height:17px;background:#f0f0f0;border-left:1px solid #ddd;border-bottom:1px solid #aaa"></div><svg class="a" style="left:363px;top:1013px" width="10" height="10" viewBox="0 0 10 10"><path d="M3 1l5 4-5 4z" fill="#000"/></svg><div class="a" style="left:375px;top:1009px;width:16px;height:17px;background:#f0f0f0;border-left:1px solid #8a8a8a;border-top:1px solid #8a8a8a"></div><div class="a" style="left:232px;top:1031px;width:72px;height:24px;background:#fff;border:1px solid #adadad"></div><div class="t" style="left:268px;top:1043px;font-size:12px;color:#333;font-family:'Liberation Sans',sans-serif;transform:translate(-50%,-50%) scaleX(1.0323);transform-origin:50% 50%;">Apply</div><div class="a" style="left:312px;top:1031px;width:72px;height:24px;background:#fff;border:1px solid #adadad"></div><div class="t" style="left:348px;top:1043px;font-size:12px;color:#333;font-family:'Liberation Sans',sans-serif;transform:translate(-50%,-50%) scaleX(0.9636);transform-origin:50% 50%;">Cancel</div><div class="a" style="left:441px;top:217px;width:801px;height:662px;background:#fff;border:1px solid #1a7dd6;"></div><div class="t" style="left:453px;top:236px;font-size:12px;color:#4a4a4a;font-family:'Liberation Sans',sans-serif;transform:translate(0,-50%) scaleX(0.9669);transform-origin:0 50%;">Machine explorer</div><div class="t" style="left:1186px;top:229px;font-size:13px;color:#666;font-family:'Liberation Sans',sans-serif;transform:translate(-50%,-50%);">?</div><svg class="a" style="left:1217px;top:223px" width="11" height="11" viewBox="0 0 11 11"><path d="M1 1l9 9M10 1l-9 9" stroke="#555" stroke-width="1.3"/></svg><svg class="a" style="left:467px;top:258px" width="28" height="28" viewBox="0 0 28 28"><path d="M3 2h13l6 6v18H3z" fill="#e8ebf0" stroke="#6f8196" stroke-width="2" stroke-linejoin="round"/><path d="M6 9h8M6 13h10M6 17h10M6 21h9" stroke="#c3c9d3" stroke-width="1.3"/><circle cx="21" cy="22" r="6" fill="#0b7a30" stroke="#fff" stroke-width="0.8"/><path d="M18 22h6M21 19v6" stroke="#fff" stroke-width="2"/></svg><svg class="a" style="left:504px;top:258px" width="28" height="28" viewBox="0 0 28 28"><g transform="translate(1,1)"><path d="M1 8l4-4h10v12l-4 4H1z" fill="#9aa8bd" stroke="#5b6b80" stroke-width="1.6" stroke-linejoin="round"/><path d="M11 8H1M11 8l4-4M11 8v12" stroke="#5b6b80" stroke-width="1.2" fill="none"/><path d="M11 8l4-4v12l-4 4z" fill="#dfe4ec"/><rect x="3" y="12" width="4" height="3" fill="#fff"/><path d="M15 10l5-3" stroke="#5b6b80" stroke-width="1.6"/><rect x="19" y="2" width="8" height="8" fill="#9aa8bd" stroke="#5b6b80" stroke-width="1.6"/><rect x="21.5" y="4" width="3" height="2" fill="#fff"/></g><circle cx="20" cy="22" r="6" fill="#f0b800" stroke="#fff" stroke-width="0.6"/><path d="M22 18l-4 3 2 1-3 4 5-3-2-1z" fill="#111"/></svg><svg class="a" style="left:542px;top:258px" width="28" height="28" viewBox="0 0 28 28"><g transform="translate(1,1)"><path d="M1 8l4-4h10v12l-4 4H1z" fill="#9aa8bd" stroke="#5b6b80" stroke-width="1.6" stroke-linejoin="round"/><path d="M11 8H1M11 8l4-4M11 8v12" stroke="#5b6b80" stroke-width="1.2" fill="none"/><path d="M11 8l4-4v12l-4 4z" fill="#dfe4ec"/><rect x="3" y="12" width="4" height="3" fill="#fff"/><path d="M15 10l5-3" stroke="#5b6b80" stroke-width="1.6"/><rect x="19" y="2" width="8" height="8" fill="#9aa8bd" stroke="#5b6b80" stroke-width="1.6"/><rect x="21.5" y="4" width="3" height="2" fill="#fff"/></g><circle cx="20" cy="22" r="6" fill="#f0b800" stroke="#fff" stroke-width="0.6"/><path d="M22 18l-4 3 2 1-3 4 5-3-2-1z" fill="#111"/></svg><svg class="a" style="left:580px;top:258px" width="28" height="28" viewBox="0 0 28 28"><path d="M3 2h13l6 6v18H3z" fill="#e8ebf0" stroke="#6f8196" stroke-width="2" stroke-linejoin="round"/><path d="M6 9h8M6 13h10M6 17h10M6 21h9" stroke="#c3c9d3" stroke-width="1.3"/><circle cx="21" cy="22" r="6" fill="#f0b800"/><circle cx="21" cy="22" r="2.6" fill="none" stroke="#111" stroke-width="2.2"/></svg><svg class="a" style="left:619px;top:258px" width="28" height="28" viewBox="0 0 28 28"><path d="M3 2h13l6 6v18H3z" fill="#e8ebf0" stroke="#6f8196" stroke-width="2" stroke-linejoin="round"/><path d="M6 9h8M6 13h10M6 17h10M6 21h9" stroke="#c3c9d3" stroke-width="1.3"/><circle cx="21" cy="22" r="6.5" fill="#e8141c" stroke="#fff" stroke-width="0.6"/><path d="M18.5 19.5l5 5M23.5 19.5l-5 5" stroke="#fff" stroke-width="2"/></svg><svg class="a" style="left:656px;top:258px" width="28" height="28" viewBox="0 0 28 28"><path d="M3 25L21 5l4.5 4.5L7.5 29.5z" fill="#3a3a3a"/><path d="M19.5 8.5l2-2 2.5 2.5-2 2z" fill="#fff" opacity="0.85"/><path d="M9 4l1 3 3 1-3 1-1 3-1-3-3-1 3-1z" fill="#e0a020"/><path d="M4 2l.6 1.4L6 4l-1.4.6L4 6l-.6-1.4L2 4l1.4-.6zM14 2l.6 1.4L16 4l-1.4.6L14 6l-.6-1.4L12 4l1.4-.6zM25 14l.6 1.4 1.4.6-1.4.6-.6 1.4-.6-1.4-1.4-.6 1.4-.6z" fill="#e0a020"/></svg><svg class="a" style="left:694px;top:258px" width="28" height="28" viewBox="0 0 28 28"><path d="M15.82 7.62L18.24 7.92L18.24 12.08L15.82 12.38L15.80 12.43L17.30 14.36L14.36 17.30L12.43 15.80L12.38 15.82L12.08 18.24L7.92 18.24L7.62 15.82L7.57 15.80L5.64 17.30L2.70 14.36L4.20 12.43L4.18 12.38L1.76 12.08L1.76 7.92L4.18 7.62L4.20 7.57L2.70 5.64L5.64 2.70L7.57 4.20L7.62 4.18L7.92 1.76L12.08 1.76L12.38 4.18L12.43 4.20L14.36 2.70L17.30 5.64L15.80 7.57Z" fill="#aab6c6" stroke="#6f8196" stroke-width="1.4" stroke-linejoin="round"/><circle cx="10" cy="10" r="3.2" fill="#fff" stroke="#6f8196" stroke-width="1.2"/><path d="M24.79 17.54L26.79 17.79L26.79 21.21L24.79 21.46L24.78 21.50L26.01 23.09L23.59 25.51L22.00 24.28L21.96 24.29L21.71 26.29L18.29 26.29L18.04 24.29L18.00 24.28L16.41 25.51L13.99 23.09L15.22 21.50L15.21 21.46L13.21 21.21L13.21 17.79L15.21 17.54L15.22 17.50L13.99 15.91L16.41 13.49L18.00 14.72L18.04 14.71L18.29 12.71L21.71 12.71L21.96 14.71L22.00 14.72L23.59 13.49L26.01 15.91L24.78 17.50Z" fill="#aab6c6" stroke="#6f8196" stroke-width="1.4" stroke-linejoin="round"/><circle cx="20" cy="19.5" r="2.7" fill="#fff" stroke="#6f8196" stroke-width="1.2"/></svg><div class="a" style="left:1113px;top:259px;width:109px;height:23px;background:#fff;border:1px solid #a8a8a8"></div><div class="t" style="left:1158px;top:270.5px;font-size:12px;color:#333;font-family:'Liberation Sans',sans-serif;transform:translate(-50%,-50%) scaleX(0.8929);transform-origin:50% 50%;">Large Icons</div><svg class="a" style="left:1207px;top:268px" width="10" height="6" viewBox="0 0 10 6"><path d="M0 0h10L5 5.5z" fill="#555"/></svg><div class="a" style="left:460px;top:301px;width:762px;height:472px;background:#fff;border-top:2px solid #6d6d6d;border-left:2px solid #6d6d6d;border-right:1px solid #e3e3e3;border-bottom:1px solid #e3e3e3"></div><svg class="a" style="left:483px;top:304px" width="120" height="120" viewBox="0 0 120 120"><defs><linearGradient id="tg483" x1="0" y1="0" x2="1" y2="1"><stop offset="0" stop-color="#b4b4b4"/><stop offset="1" stop-color="#5c5c5c"/></linearGradient></defs><rect width="120" height="120" fill="url(#tg483)"/><path d="M26 33L41 21L49 27V35L52 33V24L56 22L92 52V82L89 88L82 96L75 92L65 95L26 63Z" fill="#0d0d0d"/><path d="M27 37L33 32L72 64V70L66 76L27 43Z" fill="#bdb9ad"/><path d="M66 76L72 70V83L66 90Z" fill="#c9c6bc"/><path d="M66 76V90L62 93V79Z" fill="#9a978e"/><path d="M57 45L66 41L72 47L63 51Z" fill="#2c2c2c"/><path d="M41 21V45M53 53V86M44 47V76" stroke="#262626" stroke-width="0.8"/><path d="M80 86L88 82L92 86L84 92Z" fill="#222"/><g transform="translate(8,102)"><circle cx="4" cy="5" r="3.5" fill="none" stroke="#ddd" stroke-width="1.2"/><circle cx="1" cy="0" r="1" fill="#3350c0"/><circle cx="6" cy="10" r="1" fill="#d02020"/></g></svg><svg class="a" style="left:646px;top:304px" width="120" height="120" viewBox="0 0 120 120"><defs><linearGradient id="tg646" x1="0" y1="0" x2="1" y2="1"><stop offset="0" stop-color="#b4b4b4"/><stop offset="1" stop-color="#5c5c5c"/></linearGradient></defs><rect width="120" height="120" fill="url(#tg646)"/><path d="M76 60L89 52V88L63 106V88L76 78Z" fill="#b2b2b2"/><path d="M37 62L53 53L76 66V78L63 88V94L53 88V81L37 72Z" fill="#8e8e8e"/><path d="M37 74L55 65L76 76L63 86V88L53 82L37 76Z" fill="#c6c6c6"/><path d="M24 57L37 64V83L53 94V81L63 88V106L24 84Z" fill="#121212"/><path d="M27 62L34 66V80L27 76Z" fill="#2a2a2a"/><path d="M35 67V82" stroke="#c8701a" stroke-width="2"/><path d="M43 38L76 60V68L43 46Z" fill="#111"/><path d="M43 38L56 29L89 52L76 60Z" fill="#cfcfcf"/><path d="M47 37L56 32L72 43L63 48Z" fill="#9a9a9a"/><path d="M76 60L89 52V56L76 64Z" fill="#e4e4e4"/><rect x="63" y="28" width="3" height="18" fill="#2a2a2a"/><path d="M59 43L68 48V56L59 51Z" fill="#c8701a"/><path d="M80 62V80M85 58V84" stroke="#888" stroke-width="0.8"/><g transform="translate(8,102)"><circle cx="4" cy="5" r="3.5" fill="none" stroke="#ddd" stroke-width="1.2"/><circle cx="1" cy="0" r="1" fill="#3350c0"/><circle cx="6" cy="10" r="1" fill="#d02020"/></g></svg><div class="t" style="left:542px;top:435.5px;font-size:12px;color:#222;font-family:'Liberation Sans',sans-serif;transform:translate(-50%,-50%) scaleX(0.8712);transform-origin:50% 50%;">DMF 260</div><div class="t" style="left:706px;top:435.5px;font-size:12px;color:#222;font-family:'Liberation Sans',sans-serif;transform:translate(-50%,-50%) scaleX(0.8672);transform-origin:50% 50%;">Ken CompactB</div><div class="a" style="left:475px;top:819px;width:75px;height:23px;background:#fff;border:1px solid #adadad"></div><div class="t" style="left:512px;top:830.5px;font-size:12px;color:#222;font-family:'Liberation Sans',sans-serif;transform:translate(-50%,-50%) scaleX(0.9225);transform-origin:50% 50%;">OK</div><div class="a" style="left:595px;top:819px;width:75px;height:23px;background:#fff;border:1px solid #adadad"></div><div class="t" style="left:632px;top:830.5px;font-size:12px;color:#222;font-family:'Liberation Sans',sans-serif;transform:translate(-50%,-50%) scaleX(0.9101);transform-origin:50% 50%;">Cancel</div><div class="a" style="left:692px;top:786px;width:173px;height:73px;border:1px solid #b4b4b4"></div><div class="a" style="left:698px;top:780px;width:40px;height:12px;background:#fff"></div><div class="t" style="left:700px;top:786px;font-size:12px;color:#a0a0a0;font-family:'Liberation Sans',sans-serif;transform:translate(0,-50%) scaleX(0.8892);transform-origin:0 50%;">Display</div><svg class="a" style="left:710px;top:803px" width="12" height="12" viewBox="0 0 12 12"><circle cx="6" cy="6" r="5.2" fill="#fff" stroke="#c8c8c8" stroke-width="1"/></svg><div class="t" style="left:724px;top:809px;font-size:12px;color:#a8a8a8;font-family:'Liberation Sans',sans-serif;transform:translate(0,-50%) scaleX(0.8695);transform-origin:0 50%;">Current user</div><svg class="a" style="left:710px;top:821px" width="12" height="12" viewBox="0 0 12 12"><circle cx="6" cy="6" r="5.2" fill="#fff" stroke="#c8c8c8" stroke-width="1"/></svg><div class="t" style="left:724px;top:827px;font-size:12px;color:#a8a8a8;font-family:'Liberation Sans',sans-serif;transform:translate(0,-50%) scaleX(0.8253);transform-origin:0 50%;">Public user</div><svg class="a" style="left:710px;top:839px" width="12" height="12" viewBox="0 0 12 12"><circle cx="6" cy="6" r="5.2" fill="#fff" stroke="#c8c8c8" stroke-width="1"/></svg><div class="t" style="left:724px;top:845px;font-size:12px;color:#a8a8a8;font-family:'Liberation Sans',sans-serif;transform:translate(0,-50%) scaleX(0.8707);transform-origin:0 50%;">Current and Public users</div><div class="a" style="left:875px;top:775px;width:347px;height:92px;background:#fff;border-top:2px solid #6d6d6d;border-left:2px solid #6d6d6d"></div><div class="a" style="left:877px;top:792px;width:345px;height:1px;background:#ececec"></div><div class="a" style="left:877px;top:806px;width:345px;height:1px;background:#ececec"></div><div class="a" style="left:877px;top:820px;width:345px;height:1px;background:#ececec"></div><div class="a" style="left:877px;top:834px;width:345px;height:1px;background:#ececec"></div><div class="a" style="left:877px;top:848px;width:345px;height:1px;background:#ececec"></div><div class="a" style="left:978px;top:777px;width:1px;height:72px;background:#ececec"></div><div class="t" style="left:880px;top:786px;font-size:12px;color:#28a428;font-family:'Liberation Sans',sans-serif;transform:translate(0,-50%) scaleX(0.8896);transform-origin:0 50%;">V10 Compatibility :</div><div class="t" style="left:984px;top:786px;font-size:12px;color:#28a428;font-family:'Liberation Sans',sans-serif;transform:translate(0,-50%) scaleX(0.8146);transform-origin:0 50%;">NCSIMUL</div><div class="t" style="left:880px;top:800px;font-size:12px;color:#28a428;font-family:'Liberation Sans',sans-serif;transform:translate(0,-50%) scaleX(0.8827);transform-origin:0 50%;">CAM Compatibility :</div><div class="t" style="left:984px;top:800px;font-size:12px;color:#28a428;font-family:'Liberation Sans',sans-serif;transform:translate(0,-50%) scaleX(0.9103);transform-origin:0 50%;">This machine is suitable for the current version of</div><div class="t" style="left:880px;top:814px;font-size:12px;color:#28a428;font-family:'Liberation Sans',sans-serif;transform:translate(0,-50%) scaleX(0.9105);transform-origin:0 50%;">Licence Info :</div><div class="t" style="left:984px;top:814px;font-size:12px;color:#28a428;font-family:'Liberation Sans',sans-serif;transform:translate(0,-50%) scaleX(0.8797);transform-origin:0 50%;">Internal SPRING Technologies</div><div class="a" style="left:877px;top:850px;width:345px;height:17px;background:#f0f0f0"></div><div class="a" style="left:877px;top:850px;width:16px;height:16px;background:#fff;border:1px solid #e0e0e0"></div><svg class="a" style="left:880px;top:854px" width="10" height="9" viewBox="0 0 10 9"><path d="M7 1L2 4.5 7 8z" fill="#666"/></svg><div class="a" style="left:893px;top:850px;width:265px;height:16px;background:#fff;border:1px solid #d8d8d8"></div><div class="a" style="left:1205px;top:850px;width:17px;height:16px;background:#fff;border:1px solid #e0e0e0"></div><svg class="a" style="left:1209px;top:854px" width="10" height="9" viewBox="0 0 10 9"><path d="M3 1l5 3.5L3 8z" fill="#666"/></svg><div class="t" style="left:1542px;top:163px;font-size:18.5px;color:#3c3c3c;font-family:'Liberation Sans',sans-serif;transform:translate(0,-50%) scaleX(1.0148);transform-origin:0 50%;">Program</div><div class="t" style="left:1861px;top:163px;font-size:13px;color:#555;font-family:'Liberation Sans',sans-serif;transform:translate(-50%,-50%);">?</div><svg class="a" style="left:1876px;top:160px" width="9" height="6" viewBox="0 0 9 6"><path d="M0 0h9L4.5 5.5z" fill="#5a5a5a"/></svg><svg class="a" style="left:1893px;top:156px" width="13" height="14" viewBox="0 0 13 14"><path d="M3 1h6M4 1v6h4V1M2 7h8M6 7v6" stroke="#555" stroke-width="1.3" fill="none"/></svg><svg class="a" style="left:1911px;top:158px" width="11" height="11" viewBox="0 0 11 11"><path d="M1 1l9 9M10 1l-9 9" stroke="#555" stroke-width="1.3"/></svg><div class="a" style="left:1537px;top:181px;width:383px;height:2px;background:#6a6a6a"></div><div class="a" style="left:1537px;top:181px;width:2px;height:852px;background:#6a6a6a"></div><div class="a" style="left:1539px;top:183px;width:353px;height:831px;background:#f8f8f9"></div><div class="a" style="left:1539px;top:183px;width:15px;height:831px;background:#c4c4c4"></div><div class="a" style="left:1892px;top:183px;width:28px;height:850px;background:#f2f2f4"></div><svg class="a" style="left:1541px;top:186px" width="13" height="10" viewBox="0 0 13 10"><path d="M0 3h7V0l6 5-6 5V7H0z" fill="#00008b"/></svg><div class="a" style="left:1571px;top:182px;width:86px;height:15px;background:#0a2f5e"></div><div class="t" style="left:1571px;top:189.5px;font-size:13px;color:#fff;font-family:'Liberation Mono',monospace;transform:translate(0,-50%) scaleX(0.8972);transform-origin:0 50%;">Machine used</div><div class="t" style="left:1571px;top:204.5px;font-size:13px;color:#111;font-family:'Liberation Mono',monospace;transform:translate(0,-50%) scaleX(0.8973);transform-origin:0 50%;">Origins</div><div class="t" style="left:1571px;top:219.5px;font-size:13px;color:#111;font-family:'Liberation Mono',monospace;transform:translate(0,-50%) scaleX(0.8972);transform-origin:0 50%;">Tool magazine</div><div class="t" style="left:1571px;top:234.5px;font-size:13px;color:#111;font-family:'Liberation Mono',monospace;transform:translate(0,-50%) scaleX(0.8972);transform-origin:0 50%;">Group of operations</div><svg class="a" style="left:1556px;top:228px" width="13" height="13" viewBox="0 0 13 13"><rect x="0.5" y="0.5" width="12" height="12" fill="#fff" stroke="#111"/><path d="M3 6.5h7M6.5 3v7" stroke="#111" stroke-width="1.6"/></svg><svg class="a" style="left:1896px;top:185px" width="24" height="24" viewBox="0 0 24 24"><rect x="3" y="2" width="4" height="20" fill="#3d69a6"/><path d="M21 2v20L7 12z" fill="#3d69a6"/></svg><svg class="a" style="left:1896px;top:220px" width="24" height="24" viewBox="0 0 24 24"><rect x="3" y="2" width="4" height="20" fill="#3d69a6"/><path d="M21 2v20L7 12z" fill="#3d69a6"/><path d="M15 13h7l-2 4v3h-3v-3z" fill="#129a3c" stroke="#fff" stroke-width="0.6"/><circle cx="18.5" cy="21" r="1.5" fill="#f48a1c"/></svg><svg class="a" style="left:1896px;top:256px" width="24" height="24" viewBox="0 0 24 24"><path d="M20 2v20L4 12z" fill="#3d69a6"/></svg><svg class="a" style="left:1896px;top:291px" width="24" height="24" viewBox="0 0 24 24"><path d="M4 2v20l16-10z" fill="#3d69a6"/></svg><svg class="a" style="left:1896px;top:326px" width="24" height="24" viewBox="0 0 24 24"><path d="M5 2v20l13-10z" fill="#3d69a6"/><rect x="18" y="2" width="4" height="20" fill="#3d69a6"/><path d="M1 12h7l-2 4v3H3v-3z" fill="#129a3c" stroke="#fff" stroke-width="0.6"/><circle cx="4.5" cy="20" r="1.5" fill="#f48a1c"/></svg><svg class="a" style="left:1896px;top:361px" width="24" height="24" viewBox="0 0 24 24"><path d="M4 2v20l14-10z" fill="#3d69a6"/><rect x="18" y="2" width="4" height="20" fill="#3d69a6"/></svg><svg class="a" style="left:1896px;top:396px" width="24" height="24" viewBox="0 0 24 24"><path d="M6 3a1.5 1.5 0 0 1 3 0v7l1-1a1.5 1.5 0 0 1 2.5.5l1 .5a1.5 1.5 0 0 1 2.5 1l1 .5a1.5 1.5 0 0 1 2 1.5v5l-3 4H9l-6-7 1-2 2 1z" fill="#e8eef6" stroke="#3d69a6" stroke-width="1.6" stroke-linejoin="round"/><circle cx="18" cy="18" r="5" fill="#0b7a30" stroke="#fff" stroke-width="0.8"/><path d="M15 18h6M18 15v6" stroke="#fff" stroke-width="2"/></svg><svg class="a" style="left:1896px;top:431px" width="24" height="24" viewBox="0 0 24 24"><path d="M6 3a1.5 1.5 0 0 1 3 0v7l1-1a1.5 1.5 0 0 1 2.5.5l1 .5a1.5 1.5 0 0 1 2.5 1l1 .5a1.5 1.5 0 0 1 2 1.5v5l-3 4H9l-6-7 1-2 2 1z" fill="#e8eef6" stroke="#3d69a6" stroke-width="1.6" stroke-linejoin="round"/><circle cx="18" cy="18" r="5" fill="#e31c1c" stroke="#fff" stroke-width="0.8"/><path d="M16 16l4 4M20 16l-4 4" stroke="#fff" stroke-width="1.6"/></svg><svg class="a" style="left:1896px;top:467px" width="24" height="24" viewBox="0 0 24 24"><path d="M5 19L18 4l3 3L8 22H5z" fill="#fff" stroke="#b8c0cc" stroke-width="1.5"/><path d="M5 19l3 3H5z" fill="#f2d060"/></svg><svg class="a" style="left:1896px;top:501px" width="24" height="24" viewBox="0 0 24 24"><path d="M4 8l3-5h3l1 5v10H3z" fill="#3d69a6"/><path d="M20 8l-3-5h-3l-1 5v10h8z" fill="#3d69a6"/><rect x="9" y="8" width="6" height="5" fill="#3d69a6"/><rect x="5" y="11" width="3" height="6" fill="#d8e2ee"/><rect x="16" y="11" width="3" height="6" fill="#d8e2ee"/></svg><div class="a" style="left:1539px;top:1014px;width:353px;height:17px;background:#ececec"></div><svg class="a" style="left:1542px;top:1017px" width="10" height="11" viewBox="0 0 10 11"><path d="M7 1L2 5.5 7 10" fill="none" stroke="#333" stroke-width="1.6"/></svg><div class="a" style="left:1555px;top:1015px;width:17px;height:15px;background:#c6c6c6"></div><svg class="a" style="left:1878px;top:1017px" width="10" height="11" viewBox="0 0 10 11"><path d="M3 1l5 4.5L3 10" fill="none" stroke="#333" stroke-width="1.6"/></svg><div class="a" style="left:1537px;top:1033px;width:383px;height:1px;background:#e0e0e0"></div><div class="a" style="left:1537px;top:1033px;width:383px;height:3px;background:#dcdcdc"></div><div class="a" style="left:1609px;top:1036px;width:311px;height:22px;background:#fadcdc"></div><div class="a" style="left:1538px;top:1036px;width:71px;height:22px;background:#fff;border-left:1px solid #bbb;border-right:1px solid #bbb"></div><div class="a" style="left:1538px;top:1055px;width:71px;height:3px;background:#d21f1f"></div><svg class="a" style="left:1542px;top:1039px" width="15" height="14" viewBox="0 0 15 14"><rect x="0.5" y="0.5" width="13" height="12" fill="#f5a623" stroke="#6fa8e0"/><rect x="0.5" y="0.5" width="13" height="3" fill="#7ab0ea"/><path d="M3 7h8M3 10h8" stroke="#fff" stroke-width="1.2"/></svg><div class="t" style="left:1560px;top:1045.5px;font-size:12px;color:#1a1a2a;font-weight:bold;font-family:'Liberation Sans',sans-serif;transform:translate(0,-50%) scaleX(0.8914);transform-origin:0 50%;">Program</div></body></html>
